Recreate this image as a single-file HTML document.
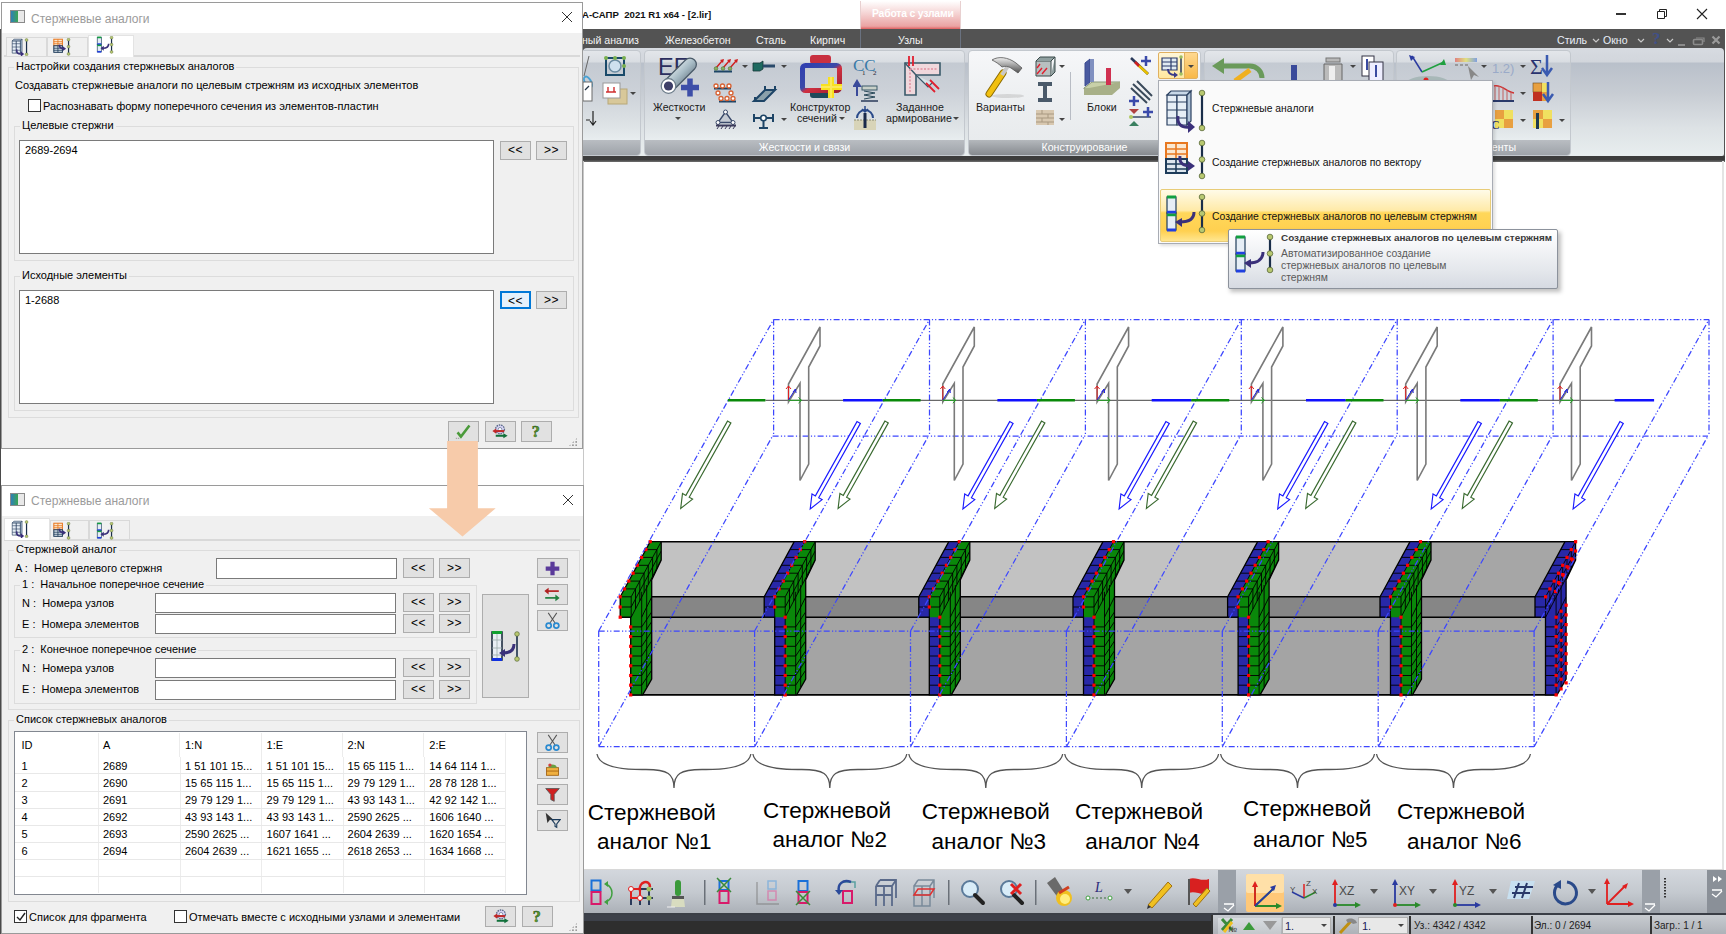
<!DOCTYPE html>
<html><head><meta charset="utf-8">
<style>
*{box-sizing:border-box}
body{margin:0;width:1726px;height:934px;position:relative;overflow:hidden;background:#fff;font-family:"Liberation Sans",sans-serif}
.a{position:absolute}
.t{position:absolute;white-space:nowrap;font-size:11px;line-height:14px;color:#000}
.dlg{position:absolute;background:#f0f0f0;border:1px solid #9a9a9a}
.gb{position:absolute;border:1px solid #dcdcdc}
.inp{position:absolute;background:#fff;border:1px solid #7a7a7a}
.btn{position:absolute;background:#e1e1e1;border:1px solid #adadad;font-size:12px;text-align:center;color:#000;letter-spacing:0.5px}
.cb{position:absolute;width:13px;height:13px;background:#fff;border:1px solid #333}
.tab{position:absolute;background:#f0f0f0;border:1px solid #d9d9d9;border-bottom:none}
.on{background:#fff}
.lbl{position:absolute;white-space:nowrap;font-size:11px;line-height:13px;background:#f0f0f0;padding:0 2px}
.lb{position:absolute;white-space:nowrap;font-size:22.5px;line-height:23px;color:#000}
</style></head><body>
<!-- left dark edge -->
<div class="a" style="left:0;top:29px;width:1px;height:905px;background:#4a4a4a"></div>

<!-- ===== APP WINDOW ===== -->
<div class="a" style="left:583px;top:0;width:1143px;height:29px;background:#fff"></div>
<div class="t" style="left:582px;top:8px;font-size:9.6px;line-height:13px;font-weight:bold;color:#111">А-САПР&nbsp; 2021 R1 x64 - [2.lir]</div>
<div class="a" style="left:860px;top:1px;width:101px;height:28px;background:linear-gradient(#fff 0,#f6d8d8 40%,#eba3a3 90%,#e06060 100%);border-left:1px solid #e8d0d0;border-right:1px solid #e8d0d0"></div>
<div class="t" style="left:872px;top:7px;font-size:10.4px;color:#fff;font-weight:bold;letter-spacing:-0.2px">Работа с узлами</div>
<!-- window controls -->
<div class="a" style="left:1616px;top:13px;width:10px;height:1.5px;background:#333"></div>
<svg class="a" style="left:1655px;top:8px" width="13" height="12"><path d="M2.5 3.5h7v7h-7z M4.5 3.5v-2h7v7h-2" fill="none" stroke="#222"/></svg>
<svg class="a" style="left:1696px;top:8px" width="12" height="12"><path d="M1 1L11 11M11 1L1 11" stroke="#222" stroke-width="1.1"/></svg>
<!-- tab bar -->
<div class="a" style="left:583px;top:29px;width:1142px;height:133px;background:#535353"></div>
<div class="a" style="left:860px;top:29px;width:101px;height:19px;border-left:1px solid #6a7280;border-right:1px solid #6a7280"></div>
<div class="t" style="left:582px;top:33px;font-size:10.6px;color:#f2f2f2">ный анализ</div>
<div class="t" style="left:665px;top:33px;font-size:10.6px;color:#f2f2f2">Железобетон</div>
<div class="t" style="left:756px;top:33px;font-size:10.6px;color:#f2f2f2">Сталь</div>
<div class="t" style="left:810px;top:33px;font-size:10.6px;color:#f2f2f2">Кирпич</div>
<div class="t" style="left:898px;top:33px;font-size:10.6px;color:#f2f2f2">Узлы</div>
<div class="t" style="left:1557px;top:33px;font-size:10.6px;color:#e8eef8">Стиль</div>
<div class="t" style="left:1603px;top:33px;font-size:10.6px;color:#e8eef8">Окно</div>
<svg class="a" style="left:1590px;top:36px" width="120" height="10"><g fill="none" stroke="#c8c8c8" stroke-width="1.2"><path d="M3 3l3 3 3-3"/><path d="M48 3l3 3 3-3"/><path d="M77 3l3 3 3-3"/></g><rect x="88" y="8" width="7" height="2" fill="#8a8a8a"/><rect x="103.5" y="3.5" width="9" height="5" rx="1" fill="none" stroke="#8a8a8a" stroke-width="1.6"/><path d="M106 2h8v4" fill="none" stroke="#8a8a8a" stroke-width="1.2"/></svg>
<div class="t" style="left:1652px;top:31px;font-size:17px;line-height:16px;color:#40508a;font-weight:bold;font-family:'Liberation Serif'">?</div>
<svg class="a" style="left:1710px;top:34px" width="12" height="12"><path d="M2.5 2.5L9.5 9.5M9.5 2.5L2.5 9.5" stroke="#9a9a9a" stroke-width="2.2"/></svg>
<!-- ribbon base -->
<div class="a" style="left:583px;top:48px;width:1141px;height:108px;border-radius:4px 4px 2px 2px;background:linear-gradient(#d7dbe1 0,#d2d6dc 14px,#b9c0ca 15px,#c7ccd3 45px,#dde2e5 80px,#e8eeef 100%)"></div>
<style>
.pn{position:absolute;top:50px;height:106px;border-radius:4px;border:1px solid #c3c8ce;background:linear-gradient(#e3e6ea 0,#d9dde2 11px,#c4cad2 12px,#ccd1d8 40px,#dee3e6 75px,#e9eef0 90px)}
.pl{position:absolute;left:0;right:0;bottom:0;height:15px;background:linear-gradient(#b9bdc2,#9ea3a9);border-radius:0 0 3px 3px;color:#fff;font-size:10.6px;line-height:15px;text-align:center;white-space:nowrap}
.rt{position:absolute;white-space:nowrap;font-size:10.6px;line-height:12px;color:#1a1a1a;text-align:center}
.dd{position:absolute;width:0;height:0;border-left:3px solid transparent;border-right:3px solid transparent;border-top:3px solid #444}
</style>
<div class="pn" style="left:578px;width:63px"><div class="pl"></div></div>
<div class="pn" style="left:644px;width:321px"><div class="pl">Жесткости и связи</div></div>
<div class="pn" style="left:968px;width:233px;background:linear-gradient(#f6f7f9 0,#eef0f2 40%,#e8ebed 90px)"><div class="pl" style="background:linear-gradient(#b4b8bc,#868a8f)">Конструирование</div></div>
<div class="pn" style="left:1204px;width:190px"><div class="pl"></div></div>
<div class="pn" style="left:1396px;width:175px"><div class="pl" style="text-align:right;padding-right:54px">Инструменты</div></div>
<!-- P1 icons -->
<svg class="a" style="left:583px;top:54px" width="58" height="80">
 <path d="M6 2 L1 22" stroke="#666" stroke-width="1"/><ellipse cx="5" cy="28" rx="3" ry="6" fill="none" stroke="#4aa0d0" stroke-width="2" transform="rotate(-30 5 28)"/>
 <rect x="23" y="4" width="18" height="17" fill="none" stroke="#1a4a6a" stroke-width="2"/><circle cx="32" cy="12" r="6" fill="#cfe0ee" stroke="#6a8aa0" stroke-width="1.5"/><circle cx="23" cy="4" r="2" fill="#7ab050"/><circle cx="32" cy="4" r="2" fill="#7ab050"/><circle cx="41" cy="4" r="2" fill="#7ab050"/><circle cx="41" cy="12" r="2" fill="#7ab050"/>
 <rect x="0" y="28" width="9" height="19" fill="#fff" stroke="#6a6a6a"/><path d="M2 36l4-4" stroke="#234" stroke-width="1.2"/>
 <rect x="25" y="35" width="19" height="15" fill="#d8c89a" stroke="#b8a878"/><rect x="20" y="29" width="17" height="15" fill="#fff" stroke="#999"/><path d="M23 38h10M25 33v5M31 33v5" stroke="#d03030" stroke-width="1.4"/>
 <path d="M3 66h4M10 57v13M7 67l3 4 3-4" stroke="#222" stroke-width="1.2" fill="none"/>
</svg>
<div class="dd" style="left:630px;top:92px"></div>
<!-- P2 icons -->
<svg class="a" style="left:655px;top:55px" width="50" height="45">
 <defs><linearGradient id="pg" x1="0" y1="0" x2="1" y2="1"><stop offset="0" stop-color="#f4f8fa"/><stop offset=".5" stop-color="#a8bcc6"/><stop offset="1" stop-color="#5a6a78"/></linearGradient></defs>
 <text x="3" y="19.5" font-family="Liberation Sans" font-size="23.5" fill="#2b2e5e">EF</text>
 <path d="M13.5 31 L35 9.5" stroke="#4a5a68" stroke-width="14" stroke-linecap="round"/><path d="M13.5 31 L35 9.5" stroke="url(#pg)" stroke-width="11.5" stroke-linecap="round"/>
 <circle cx="13.5" cy="31" r="7.3" fill="#fff" stroke="#6a7a88" stroke-width="1.2"/><circle cx="13.5" cy="31" r="4.6" fill="#3e3f68"/>
 <path d="M35 23.5v18M26 32.5h18" stroke="#3d4ea8" stroke-width="5.5"/>
</svg>
<div class="rt" style="left:653px;top:101px">Жесткости</div>
<div class="dd" style="left:675px;top:117px"></div>
<svg class="a" style="left:712px;top:57px" width="80" height="75">
 <g stroke="#1d4466" stroke-width="2" fill="none"><path d="M2 14.5h18"/><path d="M2 31.5h17M7 44.5h17"/></g>
 <g stroke="#d02020" stroke-width="1.4" fill="none"><path d="M4 11l6-7M11 11l6-7M18 11l6-7"/></g><g fill="#d02020"><path d="M8 3l4-1-1 4z M15 3l4-1-1 4z M22 3l4-1-1 4z"/></g>
 <g fill="#8ab060" stroke="#4a7030" stroke-width=".6"><circle cx="4" cy="11.5" r="1.8"/><circle cx="11" cy="11.5" r="1.8"/><circle cx="18" cy="11.5" r="1.8"/></g>
 <g fill="#fff" stroke="#d86030" stroke-width="1.3"><circle cx="4" cy="29" r="2"/><circle cx="10.5" cy="29" r="2"/><circle cx="17" cy="29" r="2"/><circle cx="6" cy="36" r="2"/><circle cx="19" cy="36" r="2"/><circle cx="9" cy="41.5" r="2"/><circle cx="15" cy="41.5" r="2"/><circle cx="21" cy="41.5" r="2"/></g>
 <path d="M13.5 55 L6 65.5 H21 Z" fill="#c5cbd3" stroke="#3a4a6a" stroke-width="1.4"/><circle cx="13.5" cy="55" r="2" fill="#fff" stroke="#3a4a6a"/><circle cx="6" cy="65.5" r="2" fill="#fff" stroke="#3a4a6a"/><circle cx="21" cy="65.5" r="2" fill="#fff" stroke="#3a4a6a"/><path d="M4 68.5h20" stroke="#3a3a5a" stroke-width="2"/><path d="M5 72l2-3M9 72l2-3M13 72l2-3M17 72l2-3M21 72l2-3" stroke="#3a3a5a"/>
 <path d="M41 6h7l3-2v8l-3 2h-7z" fill="#1e6a60" stroke="#183838" stroke-width=".8"/><path d="M51 9h12" stroke="#2a4a6a" stroke-width="3"/>
 <path d="M42 44 L53 33 H63 L52 44 Z" fill="#8aa0aa" stroke="#1d4466" stroke-width="2"/><path d="M43 44v-4M63 33v-4M53 33v-4" stroke="#1d4466" stroke-width="2"/>
 <path d="M42 61h19M42 57v8M61 57v8M51.5 61v10M47 71h9" stroke="#1d4466" stroke-width="2"/><circle cx="51.5" cy="61" r="2.8" fill="#fff" stroke="#1d4466" stroke-width="1.6"/>
</svg>
<div class="dd" style="left:742px;top:65px"></div><div class="dd" style="left:781px;top:65px"></div><div class="dd" style="left:781px;top:118px"></div>
<svg class="a" style="left:798px;top:54px" width="48" height="46">
 <defs><linearGradient id="kg" x1="0" y1="0" x2="1" y2="1"><stop offset="0" stop-color="#3040b0"/><stop offset=".45" stop-color="#3a4aa8"/><stop offset=".55" stop-color="#d03040"/><stop offset="1" stop-color="#a02030"/></linearGradient></defs>
 <rect x="12" y="1" width="21" height="9" rx="3" fill="#c83040"/><rect x="12" y="36" width="21" height="8" rx="3" fill="#1e4a5a"/>
 <rect x="4.5" y="11.5" width="37" height="25" rx="3" fill="none" stroke="url(#kg)" stroke-width="5"/>
 <path d="M33 23v21M23 33h21" stroke="#f8e020" stroke-width="6"/><path d="M33 23v21M23 33h21" stroke="#fff080" stroke-width="2" opacity=".6"/>
</svg>
<div class="rt" style="left:790px;top:101px">Конструктор</div>
<div class="rt" style="left:797px;top:112px">сечений</div><div class="dd" style="left:839px;top:117px"></div>
<svg class="a" style="left:853px;top:55px" width="28" height="75">
 <text x="0" y="16" font-family="Liberation Serif" font-size="17" fill="#3a7aa8">CC</text><text x="9" y="20" font-family="Liberation Serif" font-size="7" fill="#223">1</text><text x="20" y="20" font-family="Liberation Serif" font-size="7" fill="#223">2</text>
 <g transform="translate(0,-7)"><path d="M4 48v-13M1 38l3-5 3 5z" stroke="#3a4a9a" stroke-width="2" fill="#3a4a9a"/><rect x="9" y="38" width="15" height="4" fill="#c8d0c8" stroke="#3a5a6a"/><path d="M11 43l11 2-11 2 11 2-11 2" stroke="#2a4a5a" fill="none"/><path d="M8 53h17" stroke="#2a3a5a" stroke-width="1.5"/></g>
 <g transform="translate(0,3)"><rect x="1" y="62" width="22" height="11" fill="#d8d4b8"/><path d="M1 62h22" stroke="#8a8a70" stroke-dasharray="2,1"/><path d="M12 55v15" stroke="#1a2a4a" stroke-width="3"/><path d="M4 60a8 8 0 0 1 16 0" fill="none" stroke="#2a4a8a" stroke-width="2"/><path d="M12 48v6M9 51l3 3 3-3" stroke="#2a4a8a" stroke-width="1.5" fill="none"/></g>
</svg>
<svg class="a" style="left:902px;top:55px" width="42" height="44">
 <path d="M3 8 L3 40 L14 40 L14 20 L38 20 L38 8 Z" fill="#f0d8dc" stroke="#3a5a6a" stroke-width="1.6"/>
 <path d="M3 8 L14 20" stroke="#3a5a6a" stroke-width="1.4"/><path d="M8 14v24M8 14h28" stroke="#e090a0" stroke-width="1.5" stroke-dasharray="2,1.5"/>
 <path d="M14 20 L26 32 L30 28" fill="#d8e4e8" stroke="#3a5a6a" stroke-width="1.2"/>
 <path d="M7 1v10M11 1v10" stroke="#e02030" stroke-width="1.8"/><path d="M24 28l9 9M28 25l9 9" stroke="#e02030" stroke-width="1.8"/>
</svg>
<div class="rt" style="left:896px;top:101px">Заданное</div>
<div class="rt" style="left:886px;top:112px">армирование</div><div class="dd" style="left:953px;top:117px"></div>
<!-- P3 icons -->
<svg class="a" style="left:978px;top:54px" width="48" height="46">
 <defs><linearGradient id="hg" x1="0" y1="0" x2="0" y2="1"><stop offset="0" stop-color="#f0f0f0"/><stop offset=".5" stop-color="#a0a0a0"/><stop offset="1" stop-color="#505050"/></linearGradient></defs>
 <ellipse cx="30" cy="42" rx="16" ry="2" fill="#bbb" opacity=".5"/>
 <path d="M11 40 L25 19" stroke="#8a6a00" stroke-width="7" stroke-linecap="round"/><path d="M11 40 L25 19" stroke="#f2c010" stroke-width="5" stroke-linecap="round"/>
 <path d="M24 21 L30 12" stroke="#c8c8c8" stroke-width="4"/>
 <path d="M14 6 C20 2 30 3 38 9 L44 14 L40 19 L33 14 C30 12 27 12 24 13 C21 10 18 8 14 6 Z" fill="url(#hg)" stroke="#555" stroke-width=".8"/>
</svg>
<div class="rt" style="left:976px;top:101px">Варианты</div>
<svg class="a" style="left:1033px;top:56px" width="40" height="75">
 <path d="M3 5h15v15H3z" fill="#b8c0c0" stroke="#3a4a4a"/><path d="M3 5l4-4h15l-4 4M18 20l4-4V1" fill="#90a0a0" stroke="#3a4a4a"/><path d="M4 18l5-6M9 18l5-6M4 12l3-4" stroke="#e02030" stroke-width="1.4"/>
 <path d="M5 28h14M12 28v16M5 44h14" stroke="#4a5a6a" stroke-width="4"/>
 <rect x="3" y="54" width="18" height="15" fill="#d8c8b0"/><path d="M3 58h18M3 62h18M3 66h18M9 54v4M15 58v4M9 62v4M15 66v3" stroke="#a89880" stroke-width="1"/>
</svg>
<div class="dd" style="left:1059px;top:65px"></div><div class="dd" style="left:1059px;top:118px"></div>
<div class="a" style="left:1070px;top:72px;width:1px;height:48px;background:#b8bcc4"></div>
<svg class="a" style="left:1082px;top:58px" width="42" height="38">
 <path d="M2 30 L10 24 H38 L30 31 H2 Z" fill="#c8d0a8" stroke="#8a9878"/><path d="M2 31v6h28l8-7v-6" fill="#a8b088"/>
 <path d="M3 28V5l5-4v23z" fill="#4a5aa0" stroke="#3a4a90"/><rect x="8" y="1" width="4" height="23" fill="#8090c0"/>
 <rect x="24" y="10" width="5" height="17" fill="#d03050"/>
</svg>
<div class="rt" style="left:1087px;top:101px">Блоки</div>
<svg class="a" style="left:1128px;top:54px" width="28" height="75">
 <path d="M3 4 L20 20" stroke="#2a3a5a" stroke-width="2.5"/><path d="M10 11 L20 20" stroke="#e8c000" stroke-width="2.5"/><path d="M7 8l4 4" stroke="#d02020" stroke-width="2.5"/><path d="M18 2v10M13 7h10" stroke="#3a4aaa" stroke-width="2.5"/>
 <path d="M5 30 L22 46M9 27 L24 42M3 34 L19 49" stroke="#3a4a5a" stroke-width="2"/><path d="M6 42v10M1 47h10" stroke="#3a4aaa" stroke-width="2.5"/>
 <path d="M3 63h20" stroke="#3a4a6a" stroke-width="1.5"/><path d="M6 60l5-5h-10z" fill="#b04040"/><path d="M6 67l5 5h-10z" fill="#3a8060"/><circle cx="3" cy="63" r="2" fill="#b0c860"/><path d="M20 53v10M15 58h10" stroke="#3a4aaa" stroke-width="2.5"/>
</svg>
<div class="a" style="left:1158px;top:52px;width:40px;height:27px;border:1px solid #e0b060;border-radius:2px;background:linear-gradient(#fff6d8,#ffe8a0)"></div>
<div class="a" style="left:1184px;top:53px;width:13px;height:25px;background:linear-gradient(#ffd890,#f8b848);border-left:1px solid #e0b060"></div>
<div class="dd" style="left:1188px;top:65px"></div>
<svg class="a" style="left:1160px;top:54px" width="24" height="24">
 <path d="M2 4h9v12H2z M11 4h6v12h-6" fill="#e0eaf2" stroke="#2a3a6a" stroke-width="1.2"/><path d="M2 8h15M2 12h15" stroke="#2a3a6a"/>
 <path d="M8 15c0 5 3 6 7 6" fill="none" stroke="#3a3a8a" stroke-width="2"/><path d="M14 18l4 3-4 3z" fill="#3a3a8a"/><path d="M21 3v17" stroke="#2a3a5a" stroke-width="1.5"/><circle cx="21" cy="3" r="1.8" fill="#a0c060"/><circle cx="21" cy="20" r="1.8" fill="#a0c060"/>
</svg>
<!-- P4 top icons -->
<svg class="a" style="left:1210px;top:54px" width="180" height="28">
 <path d="M12 12 H40 A12 12 0 0 1 52 24" fill="none" stroke="#6a9a5a" stroke-width="5"/><path d="M2 12 L14 4 V20 Z" fill="#6a9a5a"/><path d="M25 27 L40 16" stroke="#f0b020" stroke-width="5"/>
 <rect x="81" y="11" width="6" height="17" fill="#3a4a9a"/>
 <rect x="116" y="4" width="14" height="4" fill="#b8b8b8" stroke="#777"/><path d="M114 10h18v17h-18z" fill="#bbb" stroke="#666"/><rect x="119" y="12" width="6" height="14" fill="#eee"/>
 <rect x="152" y="2" width="12" height="20" fill="#fff" stroke="#334"/><rect x="159" y="8" width="14" height="19" fill="#eef" stroke="#334"/><path d="M157 5v11M166 11v12" stroke="#3a4aa0" stroke-width="2"/>
</svg>
<div class="dd" style="left:1350px;top:65px"></div>
<!-- P5 icons -->
<svg class="a" style="left:1400px;top:54px" width="170" height="80">
 <defs><linearGradient id="rb"><stop offset="0" stop-color="#e08080"/><stop offset=".5" stop-color="#e0e080"/><stop offset="1" stop-color="#80a0e0"/></linearGradient></defs>
 <ellipse cx="28" cy="30" rx="22" ry="8" fill="#a8b8b8"/><path d="M12 2 L22 18" fill="none" stroke="#2a3aa0" stroke-width="1.5"/><path d="M22 18 L44 8" stroke="#20a040" stroke-width="1.5"/><path d="M9 1l6 2-4 4z" fill="#2a3aa0"/><path d="M44 5l2 6-6 0z" fill="#20a040"/><circle cx="26" cy="26" r="2.5" fill="#e02020"/>
 <rect x="55" y="4" width="22" height="4" fill="url(#rb)"/><path d="M55 11h3M60 11h3M65 11h3" stroke="#888" stroke-width="1.5"/><path d="M68 12l3 14 3-5 5 2z" fill="#888"/>
 <text x="92" y="19" font-family="Liberation Sans" font-size="13" fill="#9aaac8">1.2)</text>
 <text x="130" y="20" font-family="Liberation Serif" font-size="22" fill="#2a3470">Σ</text><path d="M147 1v19M142 14l5 7 5-7" stroke="#3a5ab0" stroke-width="2.5" fill="none"/>
 <path d="M94 32 C102 30 106 38 114 39" fill="none" stroke="#d03030" stroke-width="1.5"/><path d="M95 33v13M99 32v14M103 33v13M107 36v10M111 38v8" stroke="#c06060" stroke-width="1"/><path d="M93 47h21" stroke="#2a3a6a" stroke-width="2"/>
 <rect x="133" y="29" width="9" height="9" fill="#e8a040" stroke="#6a4a20" stroke-width=".6"/><rect x="142" y="29" width="6" height="9" fill="#f0e060"/><rect x="133" y="38" width="9" height="9" fill="#c03020"/><rect x="142" y="38" width="6" height="9" fill="#e8a040"/><path d="M148 28v19M143 40l5 7 5-7" stroke="#3a5ab0" stroke-width="2.5" fill="none"/>
 <rect x="95" y="56" width="9" height="9" fill="#e8a040"/><rect x="104" y="56" width="9" height="9" fill="#f0e060"/><rect x="95" y="65" width="9" height="9" fill="#f0e060"/><rect x="104" y="65" width="9" height="9" fill="#e8a040"/><text x="91" y="75" font-family="Liberation Serif" font-weight="bold" font-size="12" fill="#3a3a6a">C</text>
 <rect x="133" y="56" width="10" height="9" fill="#e8a040"/><rect x="143" y="56" width="9" height="9" fill="#f0e060"/><rect x="133" y="65" width="10" height="9" fill="#f0e060"/><rect x="143" y="65" width="9" height="9" fill="#e8a040"/><rect x="136" y="59" width="3" height="16" fill="#1e3a50"/>
</svg>
<div class="dd" style="left:1481px;top:65px"></div><div class="dd" style="left:1520px;top:65px"></div><div class="dd" style="left:1520px;top:92px"></div><div class="dd" style="left:1520px;top:119px"></div><div class="dd" style="left:1559px;top:119px"></div>
<!-- dark line below ribbon -->
<div class="a" style="left:583px;top:156px;width:1142px;height:6px;background:linear-gradient(#3c3c3c 0,#3c3c3c 60%,#707070 100%)"></div>


<svg class="a" style="left:0;top:0" width="1726" height="934" viewBox="0 0 1726 934">
<polygon points="650,541.7 1565,541.7 1535,596.8 620,596.8" fill="#c2c2c2"/>
<polygon points="1410,541.7 1565,541.7 1535,596.8 1380,596.8" fill="#a6a6a6"/>
<rect x="620" y="596.8" width="916" height="20.4" fill="#868686"/>
<rect x="631" y="617.2" width="915" height="77.7" fill="#a4a4a4"/>
<g stroke="#000" stroke-width="1.6" fill="none">
<path d="M650 541.7H1577"/>
<path d="M620 596.8H1536M620 617.2H1546M631 694.9H1557"/>
</g>
<clipPath id="cc0"><polygon points="650.2,541.7 661.2,541.7 661.2,560.0 651.7,580.0 651.7,679.0 642.7,694.9 630.7,694.9 630.7,617.2 620.2,617.2 620.2,596.8"/></clipPath><polygon points="650.2,541.7 661.2,541.7 661.2,560.0 651.7,580.0 651.7,679.0 642.7,694.9 630.7,694.9 630.7,617.2 620.2,617.2 620.2,596.8" fill="#0a880a"/><path d="M645.9 549.6H656.9 M641.6 557.4H652.6 M637.3 565.3H648.3 M633.1 573.2H644.1 M628.8 581.1H639.8 M624.5 588.9H635.5 M661.2 541.7L631.2 596.8 M620.2 596.8H631.2 M620.2 607.0H631.2 M631.2 596.8V617.2 M631.2 607.0L661.2 551.0 M631.2 617.2L661.2 560.0 M635.5 588.9L635.5 609.0 M639.8 581.1L639.8 600.9 M644.1 573.2L644.1 592.7 M648.3 565.3L648.3 584.5 M652.6 557.4L652.6 576.3 M656.9 549.6L656.9 568.2 M641.7 591.8V694.9 M630.7 626.9H641.7 M641.7 626.9L651.7 611.9 M630.7 636.6H641.7 M641.7 636.6L651.7 621.6 M630.7 646.3H641.7 M641.7 646.3L651.7 631.3 M630.7 656.0H641.7 M641.7 656.0L651.7 641.0 M630.7 665.8H641.7 M641.7 665.8L651.7 650.8 M630.7 675.5H641.7 M641.7 675.5L651.7 660.5 M630.7 685.2H641.7 M641.7 685.2L651.7 670.2 M646.7 585.0V687.0 M641.7 617.2L651.7 597.0" stroke="#000" stroke-width="0.9" fill="none" clip-path="url(#cc0)"/><polygon points="650.2,541.7 661.2,541.7 661.2,560.0 651.7,580.0 651.7,679.0 642.7,694.9 630.7,694.9 630.7,617.2 620.2,617.2 620.2,596.8" fill="none" stroke="#000" stroke-width="1.3"/><rect x="648.6" y="540.1" width="3.2" height="3.2" fill="#f00"/><rect x="644.3" y="548.0" width="3.2" height="3.2" fill="#f00"/><rect x="640.0" y="555.8" width="3.2" height="3.2" fill="#f00"/><rect x="635.7" y="563.7" width="3.2" height="3.2" fill="#f00"/><rect x="631.5" y="571.6" width="3.2" height="3.2" fill="#f00"/><rect x="627.2" y="579.5" width="3.2" height="3.2" fill="#f00"/><rect x="622.9" y="587.3" width="3.2" height="3.2" fill="#f00"/><rect x="618.6" y="595.2" width="3.2" height="3.2" fill="#f00"/><rect x="618.6" y="605.4" width="3.2" height="3.2" fill="#f00"/><rect x="618.6" y="615.6" width="3.2" height="3.2" fill="#f00"/><rect x="629.1" y="625.3" width="3.2" height="3.2" fill="#f00"/><rect x="629.1" y="635.0" width="3.2" height="3.2" fill="#f00"/><rect x="629.1" y="644.7" width="3.2" height="3.2" fill="#f00"/><rect x="629.1" y="654.4" width="3.2" height="3.2" fill="#f00"/><rect x="629.1" y="664.2" width="3.2" height="3.2" fill="#f00"/><rect x="629.1" y="673.9" width="3.2" height="3.2" fill="#f00"/><rect x="629.1" y="683.6" width="3.2" height="3.2" fill="#f00"/><rect x="629.1" y="693.3" width="3.2" height="3.2" fill="#f00"/>
<clipPath id="cc1"><polygon points="794.2,541.7 815.2,541.7 815.2,560.0 805.7,580.0 805.7,679.0 796.7,694.9 774.7,694.9 774.7,617.2 764.2,617.2 764.2,596.8"/></clipPath><polygon points="794.2,541.7 815.2,541.7 815.2,560.0 805.7,580.0 805.7,679.0 796.7,694.9 774.7,694.9 774.7,617.2 764.2,617.2 764.2,596.8" fill="#0a880a"/><polygon points="794.2,541.7 804.7,541.7 774.7,596.8 774.7,617.2 785.2,617.2 785.2,694.9 774.7,694.9 774.7,617.2 764.2,617.2 764.2,596.8" fill="#2828a8"/><path d="M789.9 549.6H810.9 M785.6 557.4H806.6 M781.3 565.3H802.3 M777.1 573.2H798.1 M772.8 581.1H793.8 M768.5 588.9H789.5 M804.7 541.7L774.7 596.8 M774.7 596.8V617.2 M785.2 617.2V694.9 M815.2 541.7L785.2 596.8 M764.2 596.8H785.2 M764.2 607.0H785.2 M785.2 596.8V617.2 M785.2 607.0L815.2 551.0 M785.2 617.2L815.2 560.0 M789.5 588.9L789.5 609.0 M793.8 581.1L793.8 600.9 M798.1 573.2L798.1 592.7 M802.3 565.3L802.3 584.5 M806.6 557.4L806.6 576.3 M810.9 549.6L810.9 568.2 M795.7 591.8V694.9 M774.7 626.9H795.7 M795.7 626.9L805.7 611.9 M774.7 636.6H795.7 M795.7 636.6L805.7 621.6 M774.7 646.3H795.7 M795.7 646.3L805.7 631.3 M774.7 656.0H795.7 M795.7 656.0L805.7 641.0 M774.7 665.8H795.7 M795.7 665.8L805.7 650.8 M774.7 675.5H795.7 M795.7 675.5L805.7 660.5 M774.7 685.2H795.7 M795.7 685.2L805.7 670.2 M800.7 585.0V687.0 M795.7 617.2L805.7 597.0" stroke="#000" stroke-width="0.9" fill="none" clip-path="url(#cc1)"/><polygon points="794.2,541.7 815.2,541.7 815.2,560.0 805.7,580.0 805.7,679.0 796.7,694.9 774.7,694.9 774.7,617.2 764.2,617.2 764.2,596.8" fill="none" stroke="#000" stroke-width="1.3"/><rect x="803.1" y="540.1" width="3.2" height="3.2" fill="#f00"/><rect x="798.8" y="548.0" width="3.2" height="3.2" fill="#f00"/><rect x="794.5" y="555.8" width="3.2" height="3.2" fill="#f00"/><rect x="790.2" y="563.7" width="3.2" height="3.2" fill="#f00"/><rect x="786.0" y="571.6" width="3.2" height="3.2" fill="#f00"/><rect x="781.7" y="579.5" width="3.2" height="3.2" fill="#f00"/><rect x="777.4" y="587.3" width="3.2" height="3.2" fill="#f00"/><rect x="773.1" y="595.2" width="3.2" height="3.2" fill="#f00"/><rect x="773.1" y="605.4" width="3.2" height="3.2" fill="#f00"/><rect x="783.6" y="615.6" width="3.2" height="3.2" fill="#f00"/><rect x="783.6" y="625.3" width="3.2" height="3.2" fill="#f00"/><rect x="783.6" y="635.0" width="3.2" height="3.2" fill="#f00"/><rect x="783.6" y="644.7" width="3.2" height="3.2" fill="#f00"/><rect x="783.6" y="654.4" width="3.2" height="3.2" fill="#f00"/><rect x="783.6" y="664.2" width="3.2" height="3.2" fill="#f00"/><rect x="783.6" y="673.9" width="3.2" height="3.2" fill="#f00"/><rect x="783.6" y="683.6" width="3.2" height="3.2" fill="#f00"/><rect x="783.6" y="693.3" width="3.2" height="3.2" fill="#f00"/>
<clipPath id="cc2"><polygon points="948.8,541.7 969.8,541.7 969.8,560.0 960.3,580.0 960.3,679.0 951.3,694.9 929.3,694.9 929.3,617.2 918.8,617.2 918.8,596.8"/></clipPath><polygon points="948.8,541.7 969.8,541.7 969.8,560.0 960.3,580.0 960.3,679.0 951.3,694.9 929.3,694.9 929.3,617.2 918.8,617.2 918.8,596.8" fill="#0a880a"/><polygon points="948.8,541.7 959.3,541.7 929.3,596.8 929.3,617.2 939.8,617.2 939.8,694.9 929.3,694.9 929.3,617.2 918.8,617.2 918.8,596.8" fill="#2828a8"/><path d="M944.5 549.6H965.5 M940.2 557.4H961.2 M935.9 565.3H956.9 M931.7 573.2H952.7 M927.4 581.1H948.4 M923.1 588.9H944.1 M959.3 541.7L929.3 596.8 M929.3 596.8V617.2 M939.8 617.2V694.9 M969.8 541.7L939.8 596.8 M918.8 596.8H939.8 M918.8 607.0H939.8 M939.8 596.8V617.2 M939.8 607.0L969.8 551.0 M939.8 617.2L969.8 560.0 M944.1 588.9L944.1 609.0 M948.4 581.1L948.4 600.9 M952.7 573.2L952.7 592.7 M956.9 565.3L956.9 584.5 M961.2 557.4L961.2 576.3 M965.5 549.6L965.5 568.2 M950.3 591.8V694.9 M929.3 626.9H950.3 M950.3 626.9L960.3 611.9 M929.3 636.6H950.3 M950.3 636.6L960.3 621.6 M929.3 646.3H950.3 M950.3 646.3L960.3 631.3 M929.3 656.0H950.3 M950.3 656.0L960.3 641.0 M929.3 665.8H950.3 M950.3 665.8L960.3 650.8 M929.3 675.5H950.3 M950.3 675.5L960.3 660.5 M929.3 685.2H950.3 M950.3 685.2L960.3 670.2 M955.3 585.0V687.0 M950.3 617.2L960.3 597.0" stroke="#000" stroke-width="0.9" fill="none" clip-path="url(#cc2)"/><polygon points="948.8,541.7 969.8,541.7 969.8,560.0 960.3,580.0 960.3,679.0 951.3,694.9 929.3,694.9 929.3,617.2 918.8,617.2 918.8,596.8" fill="none" stroke="#000" stroke-width="1.3"/><rect x="957.7" y="540.1" width="3.2" height="3.2" fill="#f00"/><rect x="953.4" y="548.0" width="3.2" height="3.2" fill="#f00"/><rect x="949.1" y="555.8" width="3.2" height="3.2" fill="#f00"/><rect x="944.8" y="563.7" width="3.2" height="3.2" fill="#f00"/><rect x="940.6" y="571.6" width="3.2" height="3.2" fill="#f00"/><rect x="936.3" y="579.5" width="3.2" height="3.2" fill="#f00"/><rect x="932.0" y="587.3" width="3.2" height="3.2" fill="#f00"/><rect x="927.7" y="595.2" width="3.2" height="3.2" fill="#f00"/><rect x="927.7" y="605.4" width="3.2" height="3.2" fill="#f00"/><rect x="938.2" y="615.6" width="3.2" height="3.2" fill="#f00"/><rect x="938.2" y="625.3" width="3.2" height="3.2" fill="#f00"/><rect x="938.2" y="635.0" width="3.2" height="3.2" fill="#f00"/><rect x="938.2" y="644.7" width="3.2" height="3.2" fill="#f00"/><rect x="938.2" y="654.4" width="3.2" height="3.2" fill="#f00"/><rect x="938.2" y="664.2" width="3.2" height="3.2" fill="#f00"/><rect x="938.2" y="673.9" width="3.2" height="3.2" fill="#f00"/><rect x="938.2" y="683.6" width="3.2" height="3.2" fill="#f00"/><rect x="938.2" y="693.3" width="3.2" height="3.2" fill="#f00"/>
<clipPath id="cc3"><polygon points="1103.0,541.7 1124.0,541.7 1124.0,560.0 1114.5,580.0 1114.5,679.0 1105.5,694.9 1083.5,694.9 1083.5,617.2 1073.0,617.2 1073.0,596.8"/></clipPath><polygon points="1103.0,541.7 1124.0,541.7 1124.0,560.0 1114.5,580.0 1114.5,679.0 1105.5,694.9 1083.5,694.9 1083.5,617.2 1073.0,617.2 1073.0,596.8" fill="#0a880a"/><polygon points="1103.0,541.7 1113.5,541.7 1083.5,596.8 1083.5,617.2 1094.0,617.2 1094.0,694.9 1083.5,694.9 1083.5,617.2 1073.0,617.2 1073.0,596.8" fill="#2828a8"/><path d="M1098.7 549.6H1119.7 M1094.4 557.4H1115.4 M1090.1 565.3H1111.1 M1085.9 573.2H1106.9 M1081.6 581.1H1102.6 M1077.3 588.9H1098.3 M1113.5 541.7L1083.5 596.8 M1083.5 596.8V617.2 M1094.0 617.2V694.9 M1124.0 541.7L1094.0 596.8 M1073.0 596.8H1094.0 M1073.0 607.0H1094.0 M1094.0 596.8V617.2 M1094.0 607.0L1124.0 551.0 M1094.0 617.2L1124.0 560.0 M1098.3 588.9L1098.3 609.0 M1102.6 581.1L1102.6 600.9 M1106.9 573.2L1106.9 592.7 M1111.1 565.3L1111.1 584.5 M1115.4 557.4L1115.4 576.3 M1119.7 549.6L1119.7 568.2 M1104.5 591.8V694.9 M1083.5 626.9H1104.5 M1104.5 626.9L1114.5 611.9 M1083.5 636.6H1104.5 M1104.5 636.6L1114.5 621.6 M1083.5 646.3H1104.5 M1104.5 646.3L1114.5 631.3 M1083.5 656.0H1104.5 M1104.5 656.0L1114.5 641.0 M1083.5 665.8H1104.5 M1104.5 665.8L1114.5 650.8 M1083.5 675.5H1104.5 M1104.5 675.5L1114.5 660.5 M1083.5 685.2H1104.5 M1104.5 685.2L1114.5 670.2 M1109.5 585.0V687.0 M1104.5 617.2L1114.5 597.0" stroke="#000" stroke-width="0.9" fill="none" clip-path="url(#cc3)"/><polygon points="1103.0,541.7 1124.0,541.7 1124.0,560.0 1114.5,580.0 1114.5,679.0 1105.5,694.9 1083.5,694.9 1083.5,617.2 1073.0,617.2 1073.0,596.8" fill="none" stroke="#000" stroke-width="1.3"/><rect x="1111.9" y="540.1" width="3.2" height="3.2" fill="#f00"/><rect x="1107.6" y="548.0" width="3.2" height="3.2" fill="#f00"/><rect x="1103.3" y="555.8" width="3.2" height="3.2" fill="#f00"/><rect x="1099.0" y="563.7" width="3.2" height="3.2" fill="#f00"/><rect x="1094.8" y="571.6" width="3.2" height="3.2" fill="#f00"/><rect x="1090.5" y="579.5" width="3.2" height="3.2" fill="#f00"/><rect x="1086.2" y="587.3" width="3.2" height="3.2" fill="#f00"/><rect x="1081.9" y="595.2" width="3.2" height="3.2" fill="#f00"/><rect x="1081.9" y="605.4" width="3.2" height="3.2" fill="#f00"/><rect x="1092.4" y="615.6" width="3.2" height="3.2" fill="#f00"/><rect x="1092.4" y="625.3" width="3.2" height="3.2" fill="#f00"/><rect x="1092.4" y="635.0" width="3.2" height="3.2" fill="#f00"/><rect x="1092.4" y="644.7" width="3.2" height="3.2" fill="#f00"/><rect x="1092.4" y="654.4" width="3.2" height="3.2" fill="#f00"/><rect x="1092.4" y="664.2" width="3.2" height="3.2" fill="#f00"/><rect x="1092.4" y="673.9" width="3.2" height="3.2" fill="#f00"/><rect x="1092.4" y="683.6" width="3.2" height="3.2" fill="#f00"/><rect x="1092.4" y="693.3" width="3.2" height="3.2" fill="#f00"/>
<clipPath id="cc4"><polygon points="1257.6,541.7 1278.6,541.7 1278.6,560.0 1269.1,580.0 1269.1,679.0 1260.1,694.9 1238.1,694.9 1238.1,617.2 1227.6,617.2 1227.6,596.8"/></clipPath><polygon points="1257.6,541.7 1278.6,541.7 1278.6,560.0 1269.1,580.0 1269.1,679.0 1260.1,694.9 1238.1,694.9 1238.1,617.2 1227.6,617.2 1227.6,596.8" fill="#0a880a"/><polygon points="1257.6,541.7 1268.1,541.7 1238.1,596.8 1238.1,617.2 1248.6,617.2 1248.6,694.9 1238.1,694.9 1238.1,617.2 1227.6,617.2 1227.6,596.8" fill="#2828a8"/><path d="M1253.3 549.6H1274.3 M1249.0 557.4H1270.0 M1244.7 565.3H1265.7 M1240.5 573.2H1261.5 M1236.2 581.1H1257.2 M1231.9 588.9H1252.9 M1268.1 541.7L1238.1 596.8 M1238.1 596.8V617.2 M1248.6 617.2V694.9 M1278.6 541.7L1248.6 596.8 M1227.6 596.8H1248.6 M1227.6 607.0H1248.6 M1248.6 596.8V617.2 M1248.6 607.0L1278.6 551.0 M1248.6 617.2L1278.6 560.0 M1252.9 588.9L1252.9 609.0 M1257.2 581.1L1257.2 600.9 M1261.5 573.2L1261.5 592.7 M1265.7 565.3L1265.7 584.5 M1270.0 557.4L1270.0 576.3 M1274.3 549.6L1274.3 568.2 M1259.1 591.8V694.9 M1238.1 626.9H1259.1 M1259.1 626.9L1269.1 611.9 M1238.1 636.6H1259.1 M1259.1 636.6L1269.1 621.6 M1238.1 646.3H1259.1 M1259.1 646.3L1269.1 631.3 M1238.1 656.0H1259.1 M1259.1 656.0L1269.1 641.0 M1238.1 665.8H1259.1 M1259.1 665.8L1269.1 650.8 M1238.1 675.5H1259.1 M1259.1 675.5L1269.1 660.5 M1238.1 685.2H1259.1 M1259.1 685.2L1269.1 670.2 M1264.1 585.0V687.0 M1259.1 617.2L1269.1 597.0" stroke="#000" stroke-width="0.9" fill="none" clip-path="url(#cc4)"/><polygon points="1257.6,541.7 1278.6,541.7 1278.6,560.0 1269.1,580.0 1269.1,679.0 1260.1,694.9 1238.1,694.9 1238.1,617.2 1227.6,617.2 1227.6,596.8" fill="none" stroke="#000" stroke-width="1.3"/><rect x="1266.5" y="540.1" width="3.2" height="3.2" fill="#f00"/><rect x="1262.2" y="548.0" width="3.2" height="3.2" fill="#f00"/><rect x="1257.9" y="555.8" width="3.2" height="3.2" fill="#f00"/><rect x="1253.6" y="563.7" width="3.2" height="3.2" fill="#f00"/><rect x="1249.4" y="571.6" width="3.2" height="3.2" fill="#f00"/><rect x="1245.1" y="579.5" width="3.2" height="3.2" fill="#f00"/><rect x="1240.8" y="587.3" width="3.2" height="3.2" fill="#f00"/><rect x="1236.5" y="595.2" width="3.2" height="3.2" fill="#f00"/><rect x="1236.5" y="605.4" width="3.2" height="3.2" fill="#f00"/><rect x="1247.0" y="615.6" width="3.2" height="3.2" fill="#f00"/><rect x="1247.0" y="625.3" width="3.2" height="3.2" fill="#f00"/><rect x="1247.0" y="635.0" width="3.2" height="3.2" fill="#f00"/><rect x="1247.0" y="644.7" width="3.2" height="3.2" fill="#f00"/><rect x="1247.0" y="654.4" width="3.2" height="3.2" fill="#f00"/><rect x="1247.0" y="664.2" width="3.2" height="3.2" fill="#f00"/><rect x="1247.0" y="673.9" width="3.2" height="3.2" fill="#f00"/><rect x="1247.0" y="683.6" width="3.2" height="3.2" fill="#f00"/><rect x="1247.0" y="693.3" width="3.2" height="3.2" fill="#f00"/>
<clipPath id="cc5"><polygon points="1410.0,541.7 1431.0,541.7 1431.0,560.0 1421.5,580.0 1421.5,679.0 1412.5,694.9 1390.5,694.9 1390.5,617.2 1380.0,617.2 1380.0,596.8"/></clipPath><polygon points="1410.0,541.7 1431.0,541.7 1431.0,560.0 1421.5,580.0 1421.5,679.0 1412.5,694.9 1390.5,694.9 1390.5,617.2 1380.0,617.2 1380.0,596.8" fill="#0a880a"/><polygon points="1410.0,541.7 1420.5,541.7 1390.5,596.8 1390.5,617.2 1401.0,617.2 1401.0,694.9 1390.5,694.9 1390.5,617.2 1380.0,617.2 1380.0,596.8" fill="#2828a8"/><path d="M1405.7 549.6H1426.7 M1401.4 557.4H1422.4 M1397.1 565.3H1418.1 M1392.9 573.2H1413.9 M1388.6 581.1H1409.6 M1384.3 588.9H1405.3 M1420.5 541.7L1390.5 596.8 M1390.5 596.8V617.2 M1401.0 617.2V694.9 M1431.0 541.7L1401.0 596.8 M1380.0 596.8H1401.0 M1380.0 607.0H1401.0 M1401.0 596.8V617.2 M1401.0 607.0L1431.0 551.0 M1401.0 617.2L1431.0 560.0 M1405.3 588.9L1405.3 609.0 M1409.6 581.1L1409.6 600.9 M1413.9 573.2L1413.9 592.7 M1418.1 565.3L1418.1 584.5 M1422.4 557.4L1422.4 576.3 M1426.7 549.6L1426.7 568.2 M1411.5 591.8V694.9 M1390.5 626.9H1411.5 M1411.5 626.9L1421.5 611.9 M1390.5 636.6H1411.5 M1411.5 636.6L1421.5 621.6 M1390.5 646.3H1411.5 M1411.5 646.3L1421.5 631.3 M1390.5 656.0H1411.5 M1411.5 656.0L1421.5 641.0 M1390.5 665.8H1411.5 M1411.5 665.8L1421.5 650.8 M1390.5 675.5H1411.5 M1411.5 675.5L1421.5 660.5 M1390.5 685.2H1411.5 M1411.5 685.2L1421.5 670.2 M1416.5 585.0V687.0 M1411.5 617.2L1421.5 597.0" stroke="#000" stroke-width="0.9" fill="none" clip-path="url(#cc5)"/><polygon points="1410.0,541.7 1431.0,541.7 1431.0,560.0 1421.5,580.0 1421.5,679.0 1412.5,694.9 1390.5,694.9 1390.5,617.2 1380.0,617.2 1380.0,596.8" fill="none" stroke="#000" stroke-width="1.3"/><rect x="1418.9" y="540.1" width="3.2" height="3.2" fill="#f00"/><rect x="1414.6" y="548.0" width="3.2" height="3.2" fill="#f00"/><rect x="1410.3" y="555.8" width="3.2" height="3.2" fill="#f00"/><rect x="1406.0" y="563.7" width="3.2" height="3.2" fill="#f00"/><rect x="1401.8" y="571.6" width="3.2" height="3.2" fill="#f00"/><rect x="1397.5" y="579.5" width="3.2" height="3.2" fill="#f00"/><rect x="1393.2" y="587.3" width="3.2" height="3.2" fill="#f00"/><rect x="1388.9" y="595.2" width="3.2" height="3.2" fill="#f00"/><rect x="1388.9" y="605.4" width="3.2" height="3.2" fill="#f00"/><rect x="1399.4" y="615.6" width="3.2" height="3.2" fill="#f00"/><rect x="1399.4" y="625.3" width="3.2" height="3.2" fill="#f00"/><rect x="1399.4" y="635.0" width="3.2" height="3.2" fill="#f00"/><rect x="1399.4" y="644.7" width="3.2" height="3.2" fill="#f00"/><rect x="1399.4" y="654.4" width="3.2" height="3.2" fill="#f00"/><rect x="1399.4" y="664.2" width="3.2" height="3.2" fill="#f00"/><rect x="1399.4" y="673.9" width="3.2" height="3.2" fill="#f00"/><rect x="1399.4" y="683.6" width="3.2" height="3.2" fill="#f00"/><rect x="1399.4" y="693.3" width="3.2" height="3.2" fill="#f00"/>
<clipPath id="cc6"><polygon points="1565.0,541.7 1575.6,541.7 1575.6,560.0 1566.1,580.0 1566.1,679.0 1557.1,694.9 1545.5,694.9 1545.5,617.2 1535.0,617.2 1535.0,596.8"/></clipPath><polygon points="1565.0,541.7 1575.6,541.7 1575.6,560.0 1566.1,580.0 1566.1,679.0 1557.1,694.9 1545.5,694.9 1545.5,617.2 1535.0,617.2 1535.0,596.8" fill="#2828a8"/><path d="M1560.7 549.6H1571.3 M1556.4 557.4H1567.0 M1552.1 565.3H1562.7 M1547.9 573.2H1558.5 M1543.6 581.1H1554.2 M1539.3 588.9H1549.9 M1575.6 541.7L1545.6 596.8 M1535.0 596.8H1545.6 M1535.0 607.0H1545.6 M1545.6 596.8V617.2 M1545.6 607.0L1575.6 551.0 M1545.6 617.2L1575.6 560.0 M1549.9 588.9L1549.9 609.0 M1554.2 581.1L1554.2 600.9 M1558.5 573.2L1558.5 592.7 M1562.7 565.3L1562.7 584.5 M1567.0 557.4L1567.0 576.3 M1571.3 549.6L1571.3 568.2 M1556.1 591.8V694.9 M1545.5 626.9H1556.1 M1556.1 626.9L1566.1 611.9 M1545.5 636.6H1556.1 M1556.1 636.6L1566.1 621.6 M1545.5 646.3H1556.1 M1556.1 646.3L1566.1 631.3 M1545.5 656.0H1556.1 M1556.1 656.0L1566.1 641.0 M1545.5 665.8H1556.1 M1556.1 665.8L1566.1 650.8 M1545.5 675.5H1556.1 M1556.1 675.5L1566.1 660.5 M1545.5 685.2H1556.1 M1556.1 685.2L1566.1 670.2 M1561.1 585.0V687.0 M1556.1 617.2L1566.1 597.0" stroke="#000" stroke-width="0.9" fill="none" clip-path="url(#cc6)"/><polygon points="1565.0,541.7 1575.6,541.7 1575.6,560.0 1566.1,580.0 1566.1,679.0 1557.1,694.9 1545.5,694.9 1545.5,617.2 1535.0,617.2 1535.0,596.8" fill="none" stroke="#000" stroke-width="1.3"/><rect x="1574.0" y="540.1" width="3.2" height="3.2" fill="#f00"/><rect x="1569.7" y="548.0" width="3.2" height="3.2" fill="#f00"/><rect x="1565.4" y="555.8" width="3.2" height="3.2" fill="#f00"/><rect x="1561.1" y="563.7" width="3.2" height="3.2" fill="#f00"/><rect x="1556.9" y="571.6" width="3.2" height="3.2" fill="#f00"/><rect x="1552.6" y="579.5" width="3.2" height="3.2" fill="#f00"/><rect x="1548.3" y="587.3" width="3.2" height="3.2" fill="#f00"/><rect x="1544.0" y="595.2" width="3.2" height="3.2" fill="#f00"/><rect x="1574.0" y="549.4" width="3.2" height="3.2" fill="#f00"/><rect x="1571.0" y="558.4" width="3.2" height="3.2" fill="#f00"/><rect x="1569.7" y="557.3" width="3.2" height="3.2" fill="#f00"/><rect x="1566.7" y="566.3" width="3.2" height="3.2" fill="#f00"/><rect x="1565.4" y="565.1" width="3.2" height="3.2" fill="#f00"/><rect x="1562.4" y="574.1" width="3.2" height="3.2" fill="#f00"/><rect x="1561.1" y="573.0" width="3.2" height="3.2" fill="#f00"/><rect x="1558.1" y="582.0" width="3.2" height="3.2" fill="#f00"/><rect x="1556.9" y="580.9" width="3.2" height="3.2" fill="#f00"/><rect x="1553.9" y="589.9" width="3.2" height="3.2" fill="#f00"/><rect x="1554.5" y="615.6" width="3.2" height="3.2" fill="#f00"/><rect x="1559.5" y="609.6" width="3.2" height="3.2" fill="#f00"/><rect x="1564.5" y="603.6" width="3.2" height="3.2" fill="#f00"/><rect x="1554.5" y="625.3" width="3.2" height="3.2" fill="#f00"/><rect x="1559.5" y="619.3" width="3.2" height="3.2" fill="#f00"/><rect x="1564.5" y="613.3" width="3.2" height="3.2" fill="#f00"/><rect x="1554.5" y="635.0" width="3.2" height="3.2" fill="#f00"/><rect x="1559.5" y="629.0" width="3.2" height="3.2" fill="#f00"/><rect x="1564.5" y="623.0" width="3.2" height="3.2" fill="#f00"/><rect x="1554.5" y="644.7" width="3.2" height="3.2" fill="#f00"/><rect x="1559.5" y="638.7" width="3.2" height="3.2" fill="#f00"/><rect x="1564.5" y="632.7" width="3.2" height="3.2" fill="#f00"/><rect x="1554.5" y="654.4" width="3.2" height="3.2" fill="#f00"/><rect x="1559.5" y="648.4" width="3.2" height="3.2" fill="#f00"/><rect x="1564.5" y="642.4" width="3.2" height="3.2" fill="#f00"/><rect x="1554.5" y="664.2" width="3.2" height="3.2" fill="#f00"/><rect x="1559.5" y="658.2" width="3.2" height="3.2" fill="#f00"/><rect x="1564.5" y="652.2" width="3.2" height="3.2" fill="#f00"/><rect x="1554.5" y="673.9" width="3.2" height="3.2" fill="#f00"/><rect x="1559.5" y="667.9" width="3.2" height="3.2" fill="#f00"/><rect x="1564.5" y="661.9" width="3.2" height="3.2" fill="#f00"/><rect x="1554.5" y="683.6" width="3.2" height="3.2" fill="#f00"/><rect x="1559.5" y="677.6" width="3.2" height="3.2" fill="#f00"/><rect x="1564.5" y="671.6" width="3.2" height="3.2" fill="#f00"/><rect x="1554.5" y="693.3" width="3.2" height="3.2" fill="#f00"/><rect x="1559.5" y="687.3" width="3.2" height="3.2" fill="#f00"/><rect x="1564.5" y="681.3" width="3.2" height="3.2" fill="#f00"/>
<path d="M598.7 631H1534.1 M598.7 746.7H1534.1 M773.6 319.5H1709.0 M772.6 436H1708.0 M598.7 631V746.7 M773.6 319.5V436 M598.7 631L773.6 319.5 M598.7 746.7L772.6 436 M754.6 631V746.7 M929.5 319.5V436 M754.6 631L929.5 319.5 M754.6 746.7L928.5 436 M910.5 631V746.7 M1085.4 319.5V436 M910.5 631L1085.4 319.5 M910.5 746.7L1084.4 436 M1066.4 631V746.7 M1241.3 319.5V436 M1066.4 631L1241.3 319.5 M1066.4 746.7L1240.3 436 M1222.3 631V746.7 M1397.2 319.5V436 M1222.3 631L1397.2 319.5 M1222.3 746.7L1396.2 436 M1378.2 631V746.7 M1553.1 319.5V436 M1378.2 631L1553.1 319.5 M1378.2 746.7L1552.1 436 M1534.1 631V746.7 M1709.0 319.5V436 M1534.1 631L1709.0 319.5 M1534.1 746.7L1708.0 436" stroke="#3c46ff" stroke-width="1.25" fill="none" stroke-dasharray="6,2.3,1.2,2,1.2,2.3"/>
<path d="M765.4 400.3H1652.8" stroke="#444" stroke-width="1"/>
<path d="M727.8 400.3H765.4 M882.6 400.3H920.6 M1036.9 400.3H1074.9 M1191.2 400.3H1229.2 M1345.5 400.3H1383.5 M1499.8 400.3H1537.8" stroke="#0a8a0a" stroke-width="2.5"/>
<path d="M843.1 400.3H882.6 M997.4 400.3H1036.9 M1151.7 400.3H1191.2 M1306.0 400.3H1345.5 M1460.3 400.3H1499.8 M1614.6 400.3H1654.1" stroke="#1010ff" stroke-width="2.5"/>
<polygon points="800.0,480.5 800.0,383.4 788.5,402.0 788.5,384.0 820.0,327.0 820.0,346.0 808.7,367.0 808.7,464.0" fill="none" stroke="#7a7a7a" stroke-width="1.6"/>
<path d="M788.5 400V386 M786.0 389l2.5-3 2.5 3" stroke="#e02020" stroke-width="1" fill="none"/>
<path d="M788.5 400L795.5 389 M793.0 392l2.5-3 0.5 4" stroke="#2020e0" stroke-width="1" fill="none"/>
<path d="M788.5 400.3H801.5 M798.5 397.5l3 2.8-3 2.8" stroke="#20a020" stroke-width="1" fill="none"/>
<polygon points="954.3,480.5 954.3,383.4 942.8,402.0 942.8,384.0 974.3,327.0 974.3,346.0 963.0,367.0 963.0,464.0" fill="none" stroke="#7a7a7a" stroke-width="1.6"/>
<path d="M942.8 400V386 M940.3 389l2.5-3 2.5 3" stroke="#e02020" stroke-width="1" fill="none"/>
<path d="M942.8 400L949.8 389 M947.3 392l2.5-3 0.5 4" stroke="#2020e0" stroke-width="1" fill="none"/>
<path d="M942.8 400.3H955.8 M952.8 397.5l3 2.8-3 2.8" stroke="#20a020" stroke-width="1" fill="none"/>
<polygon points="1108.6,480.5 1108.6,383.4 1097.1,402.0 1097.1,384.0 1128.6,327.0 1128.6,346.0 1117.3,367.0 1117.3,464.0" fill="none" stroke="#7a7a7a" stroke-width="1.6"/>
<path d="M1097.1 400V386 M1094.6 389l2.5-3 2.5 3" stroke="#e02020" stroke-width="1" fill="none"/>
<path d="M1097.1 400L1104.1 389 M1101.6 392l2.5-3 0.5 4" stroke="#2020e0" stroke-width="1" fill="none"/>
<path d="M1097.1 400.3H1110.1 M1107.1 397.5l3 2.8-3 2.8" stroke="#20a020" stroke-width="1" fill="none"/>
<polygon points="1262.9,480.5 1262.9,383.4 1251.4,402.0 1251.4,384.0 1282.9,327.0 1282.9,346.0 1271.6,367.0 1271.6,464.0" fill="none" stroke="#7a7a7a" stroke-width="1.6"/>
<path d="M1251.4 400V386 M1248.9 389l2.5-3 2.5 3" stroke="#e02020" stroke-width="1" fill="none"/>
<path d="M1251.4 400L1258.4 389 M1255.9 392l2.5-3 0.5 4" stroke="#2020e0" stroke-width="1" fill="none"/>
<path d="M1251.4 400.3H1264.4 M1261.4 397.5l3 2.8-3 2.8" stroke="#20a020" stroke-width="1" fill="none"/>
<polygon points="1417.2,480.5 1417.2,383.4 1405.7,402.0 1405.7,384.0 1437.2,327.0 1437.2,346.0 1425.9,367.0 1425.9,464.0" fill="none" stroke="#7a7a7a" stroke-width="1.6"/>
<path d="M1405.7 400V386 M1403.2 389l2.5-3 2.5 3" stroke="#e02020" stroke-width="1" fill="none"/>
<path d="M1405.7 400L1412.7 389 M1410.2 392l2.5-3 0.5 4" stroke="#2020e0" stroke-width="1" fill="none"/>
<path d="M1405.7 400.3H1418.7 M1415.7 397.5l3 2.8-3 2.8" stroke="#20a020" stroke-width="1" fill="none"/>
<polygon points="1571.5,480.5 1571.5,383.4 1560.0,402.0 1560.0,384.0 1591.5,327.0 1591.5,346.0 1580.2,367.0 1580.2,464.0" fill="none" stroke="#7a7a7a" stroke-width="1.6"/>
<path d="M1560.0 400V386 M1557.5 389l2.5-3 2.5 3" stroke="#e02020" stroke-width="1" fill="none"/>
<path d="M1560.0 400L1567.0 389 M1564.5 392l2.5-3 0.5 4" stroke="#2020e0" stroke-width="1" fill="none"/>
<path d="M1560.0 400.3H1573.0 M1570.0 397.5l3 2.8-3 2.8" stroke="#20a020" stroke-width="1" fill="none"/>
<polygon points="857.0,421.6 815.4,495.9 812.0,494.0 810.2,509.0 822.1,499.6 818.7,497.7 860.4,423.4" fill="#fff" stroke="#1a1aff" stroke-width="1.15"/>
<polygon points="1009.7,421.6 968.1,495.9 964.7,494.0 962.9,509.0 974.8,499.6 971.4,497.7 1013.1,423.4" fill="#fff" stroke="#1a1aff" stroke-width="1.15"/>
<polygon points="1165.9,421.6 1124.3,495.9 1120.9,494.0 1119.1,509.0 1131.0,499.6 1127.6,497.7 1169.3,423.4" fill="#fff" stroke="#1a1aff" stroke-width="1.15"/>
<polygon points="1324.5,421.6 1282.9,495.9 1279.5,494.0 1277.7,509.0 1289.6,499.6 1286.2,497.7 1327.9,423.4" fill="#fff" stroke="#1a1aff" stroke-width="1.15"/>
<polygon points="1478.0,421.6 1436.4,495.9 1433.0,494.0 1431.2,509.0 1443.1,499.6 1439.7,497.7 1481.4,423.4" fill="#fff" stroke="#1a1aff" stroke-width="1.15"/>
<polygon points="1619.9,421.6 1578.3,495.9 1574.9,494.0 1573.1,509.0 1585.0,499.6 1581.6,497.7 1623.3,423.4" fill="#fff" stroke="#1a1aff" stroke-width="1.15"/>
<polygon points="727.5,421.1 685.9,495.4 682.5,493.5 680.7,508.5 692.6,499.1 689.2,497.2 730.9,422.9" fill="#fff" stroke="#3a6a30" stroke-width="1.15"/>
<polygon points="884.9,421.1 843.3,495.4 839.9,493.5 838.1,508.5 850.0,499.1 846.6,497.2 888.3,422.9" fill="#fff" stroke="#3a6a30" stroke-width="1.15"/>
<polygon points="1041.5,421.1 999.9,495.4 996.5,493.5 994.7,508.5 1006.6,499.1 1003.2,497.2 1044.9,422.9" fill="#fff" stroke="#3a6a30" stroke-width="1.15"/>
<polygon points="1193.2,421.1 1151.6,495.4 1148.2,493.5 1146.4,508.5 1158.3,499.1 1154.9,497.2 1196.6,422.9" fill="#fff" stroke="#3a6a30" stroke-width="1.15"/>
<polygon points="1352.5,421.1 1310.9,495.4 1307.5,493.5 1305.7,508.5 1317.6,499.1 1314.2,497.2 1355.9,422.9" fill="#fff" stroke="#3a6a30" stroke-width="1.15"/>
<polygon points="1509.1,421.1 1467.5,495.4 1464.1,493.5 1462.3,508.5 1474.2,499.1 1470.8,497.2 1512.5,422.9" fill="#fff" stroke="#3a6a30" stroke-width="1.15"/>
<path d="M597.0 754 C599.0 766 617.0 769.5 642.0 769.5 L646.0 769.5 C668.0 769.5 674.0 774 674.0 788 C674.0 774 680.0 769.5 702.0 769.5 L705.9 769.5 C730.9 769.5 748.9 766 750.9 754 M752.9 754 C754.9 766 772.9 769.5 797.9 769.5 L801.8 769.5 C823.8 769.5 829.8 774 829.8 788 C829.8 774 835.8 769.5 857.8 769.5 L861.8 769.5 C886.8 769.5 904.8 766 906.8 754 M908.8 754 C910.8 766 928.8 769.5 953.8 769.5 L957.8 769.5 C979.8 769.5 985.8 774 985.8 788 C985.8 774 991.8 769.5 1013.8 769.5 L1017.7 769.5 C1042.7 769.5 1060.7 766 1062.7 754 M1064.7 754 C1066.7 766 1084.7 769.5 1109.7 769.5 L1113.7 769.5 C1135.7 769.5 1141.7 774 1141.7 788 C1141.7 774 1147.7 769.5 1169.7 769.5 L1173.6 769.5 C1198.6 769.5 1216.6 766 1218.6 754 M1220.6 754 C1222.6 766 1240.6 769.5 1265.6 769.5 L1269.5 769.5 C1291.5 769.5 1297.5 774 1297.5 788 C1297.5 774 1303.5 769.5 1325.5 769.5 L1329.5 769.5 C1354.5 769.5 1372.5 766 1374.5 754 M1376.5 754 C1378.5 766 1396.5 769.5 1421.5 769.5 L1425.5 769.5 C1447.5 769.5 1453.5 774 1453.5 788 C1453.5 774 1459.5 769.5 1481.5 769.5 L1485.4 769.5 C1510.4 769.5 1528.4 766 1530.4 754" stroke="#555" stroke-width="1.3" fill="none"/>
</svg>
<div class="lb" style="left:587.8px;top:800.5px">Стержневой</div>
<div class="lb" style="left:597.0px;top:830.0px">аналог №1</div>
<div class="lb" style="left:763.0px;top:798.5px">Стержневой</div>
<div class="lb" style="left:772.5px;top:827.7px">аналог №2</div>
<div class="lb" style="left:921.7px;top:800.2px">Стержневой</div>
<div class="lb" style="left:931.6px;top:829.7px">аналог №3</div>
<div class="lb" style="left:1075.0px;top:800.2px">Стержневой</div>
<div class="lb" style="left:1085.3px;top:829.7px">аналог №4</div>
<div class="lb" style="left:1243.1px;top:797.3px">Стержневой</div>
<div class="lb" style="left:1253.1px;top:827.8px">аналог №5</div>
<div class="lb" style="left:1397.0px;top:800.2px">Стержневой</div>
<div class="lb" style="left:1407.0px;top:829.7px">аналог №6</div>
<!-- view frame -->
<div class="a" style="left:583px;top:161px;width:1px;height:709px;background:#c8c8c8"></div>
<div class="a" style="left:1722px;top:161px;width:2px;height:709px;background:#e4e4e4"></div>
<div class="a" style="left:584px;top:869px;width:1140px;height:1px;background:#d8d8d8"></div>
<!-- bottom toolbar -->
<div class="a" style="left:584px;top:870px;width:1142px;height:45px;background:linear-gradient(#d3d7dd,#c4c9cf 50%,#a9aeb5)"></div>
<div class="a" style="left:584px;top:913px;width:1142px;height:2px;background:#3a3e46"></div>
<div class="a" style="left:584px;top:915px;width:627px;height:19px;background:#2e2e2e"></div>
<div class="a" style="left:584px;top:915px;width:627px;height:6px;background:#3c4049"></div>
<svg class="a" style="left:584px;top:870px" width="1142" height="45">
 <g transform="translate(6,9)"><rect x="1.5" y="1.5" width="9" height="10" fill="none" stroke="#1a70d8" stroke-width="2"/><rect x="1.5" y="13" width="9" height="12" fill="none" stroke="#d81a6a" stroke-width="2"/><path d="M16 5 C24 9 24 19 16 23" fill="none" stroke="#40a040" stroke-width="1.5"/><path d="M14 5l4-3v6z M14 23l4-3v6z" fill="#40a040"/></g>
 <g transform="translate(44,9)"><path d="M3 10h22M3 19h22M3 10v16M12 10v16M21 10v16" stroke="#2a3a5a" stroke-width="2" fill="none"/><rect x="3" y="10" width="9" height="9" fill="none" stroke="#e02020" stroke-width="2"/><circle cx="3" cy="10" r="2.5" fill="#fff" stroke="#e02020"/><circle cx="12" cy="19" r="2.5" fill="#fff" stroke="#e02020"/><circle cx="21" cy="10" r="2.5" fill="#a0c060"/><circle cx="21" cy="19" r="2.5" fill="#a0c060"/><path d="M12 12 C10 2 22 0 22 8" fill="none" stroke="#e02020" stroke-width="2.5"/></g>
 <g transform="translate(83,8)"><rect x="8" y="2" width="6" height="16" rx="3" fill="#3a9a3a"/><path d="M5 18h12v3H5z" fill="#555"/><path d="M5 21l-1 8h14l-1-8z" fill="#d8dcc0"/><path d="M0 29h8" stroke="#eee"/></g>
 <rect x="120" y="10" width="1.5" height="25" fill="#6a7078"/>
 <g transform="translate(133,8)"><rect x="2.5" y="3" width="9" height="9" fill="none" stroke="#1a70d8" stroke-width="2"/><rect x="2.5" y="13" width="9" height="12" fill="none" stroke="#d81a6a" stroke-width="2"/><path d="M0 0L14 14M14 0L0 14" stroke="#3a8a3a" stroke-width="1.5"/></g>
 <g transform="translate(170,8)" opacity=".55"><path d="M3 4v22h22" fill="none" stroke="#777" stroke-width="1.5"/><rect x="14" y="3" width="8" height="8" fill="none" stroke="#5aa0e0" stroke-width="1.5"/><rect x="14" y="13" width="8" height="9" fill="none" stroke="#e05a9a" stroke-width="1.5"/></g>
 <g transform="translate(212,8)"><rect x="2.5" y="3" width="9" height="10" fill="none" stroke="#1a70d8" stroke-width="2"/><rect x="2.5" y="14" width="9" height="11" fill="none" stroke="#d81a6a" stroke-width="2"/><path d="M0 13L14 27M14 13L0 27" stroke="#3a8a3a" stroke-width="1.5"/></g>
 <g transform="translate(251,8)"><rect x="8" y="13" width="9" height="12" fill="none" stroke="#d81a6a" stroke-width="2"/><path d="M8 4h12v6" fill="none" stroke="#5aa0a0" stroke-width="1.5"/><path d="M16 4 C8 1 2 6 4 14" fill="none" stroke="#2a4a9a" stroke-width="2.5"/><path d="M0 12l4 5 4-5z" fill="#2a4a9a"/></g>
 <g transform="translate(290,8)" stroke="#5a6a8a" stroke-width="1.8" fill="none"><path d="M2 8h16v20M2 8v20M10 8v20M2 17h16M6 2h16v18M2 8l4-6M18 8l4-6"/></g>
 <g transform="translate(328,8)" stroke="#7a8a9a" stroke-width="1.5" fill="none"><path d="M2 8h16v20H2zM2 17h16M10 8v20M6 2h16v18M2 8l4-6M18 8l4-6"/><path d="M2 17h16l4-6H6z" stroke="#e03030"/></g>
 <rect x="364" y="10" width="1.5" height="25" fill="#6a7078"/>
 <g transform="translate(376,8)"><circle cx="10" cy="11" r="8" fill="#d8ecf8" stroke="#5a7a9a" stroke-width="2"/><path d="M15 17l8 8" stroke="#222" stroke-width="4" stroke-linecap="round"/></g>
 <g transform="translate(415,8)"><circle cx="10" cy="11" r="8" fill="#d8ecf8" stroke="#5a7a9a" stroke-width="2"/><path d="M15 17l8 8" stroke="#222" stroke-width="4" stroke-linecap="round"/><path d="M12 6l10 10M22 6L12 16" stroke="#e02020" stroke-width="3"/></g>
 <rect x="451" y="10" width="1.5" height="25" fill="#6a7078"/>
 <g transform="translate(461,7)"><path d="M2 6 L10 0 L20 16 L14 22z" fill="#6a6a6a"/><circle cx="19" cy="21" r="8" fill="#f0c020"/><circle cx="20" cy="22" r="5" fill="#ffee80"/><path d="M14 16l10-6" stroke="#d04020" stroke-width="3"/></g>
 <g transform="translate(502,8)"><text x="9" y="14" font-family="Liberation Serif" font-style="italic" font-size="14" fill="#2a2a7a">L</text><path d="M2 20h22" stroke="#3a6a3a" stroke-dasharray="2,2"/><circle cx="2" cy="20" r="2" fill="#fff" stroke="#40a040"/><circle cx="24" cy="20" r="2" fill="#fff" stroke="#40a040"/></g>
 <path d="M540 19h8l-4 5z" fill="#555"/>
 <g transform="translate(562,8)"><path d="M2 27 L22 4 L26 8 L6 30z" fill="#f0c020" stroke="#a07010"/><path d="M2 27l-1 4 4-2z" fill="#333"/></g>
 <g transform="translate(599,6)"><path d="M6 3 C12 0 18 6 26 3 V17 C18 20 12 14 6 17z" fill="#d82020"/><path d="M6 3v26" stroke="#555" stroke-width="2"/><path d="M10 28 L24 12 L27 15 L13 31z" fill="#f0c020" stroke="#a07010"/></g>
 <rect x="634" y="0" width="18" height="43" fill="#9aa0a8"/>
 <rect x="658" y="0" width="484" height="43" fill="#cbd0d6" opacity=".0"/>
 <path d="M640 34h10M640 38l4 3 6-6" stroke="#fff" stroke-width="1.3" fill="none"/>
 <path d="M687 10v20" stroke="#333" stroke-width="2" stroke-dasharray="1.5,1.5"/>
 <rect x="662" y="4" width="38" height="38" rx="2" fill="#ffc878"/><rect x="662" y="4" width="38" height="19" rx="2" fill="#ffe0a8"/>
 <g transform="translate(666,8)"><path d="M5 28V6M5 28h24M5 28L24 10" stroke="#2a8a2a" stroke-width="1.8" fill="none"/><path d="M5 28V6" stroke="#e02020" stroke-width="1.8"/><path d="M5 28L24 10" stroke="#2a3aa0" stroke-width="1.8"/><path d="M2 9l3-6 3 6z" fill="#e02020"/><path d="M26 25l6 3-6 3z" fill="#2a8a2a"/><path d="M20 9l6-2-2 6z" fill="#2a3aa0"/></g>
 <g transform="translate(706,8)"><path d="M14 20V6" stroke="#e02020" stroke-width="1.5"/><path d="M14 20l12-6" stroke="#2a8a2a" stroke-width="1.5"/><path d="M14 20L2 14" stroke="#2a3aa0" stroke-width="1.5"/><text x="16" y="8" font-size="8" font-family="Liberation Sans" fill="#444">Z</text><text x="0" y="14" font-size="8" font-family="Liberation Sans" fill="#444">Y</text><text x="22" y="16" font-size="8" font-family="Liberation Sans" fill="#444">X</text></g>
 <g transform="translate(746,8)"><path d="M5 27V4" stroke="#e02020" stroke-width="1.8"/><path d="M5 27h22" stroke="#2a8a2a" stroke-width="1.8"/><path d="M2 7l3-6 3 6z" fill="#e02020"/><path d="M25 24l6 3-6 3z" fill="#2a8a2a"/><text x="9" y="17" font-size="12" font-family="Liberation Sans" fill="#4a4a4a">XZ</text><circle cx="5" cy="27" r="2" fill="#2a3aa0"/></g>
 <path d="M786 19h8l-4 5z" fill="#555"/>
 <g transform="translate(806,8)"><path d="M5 27V4" stroke="#2a3aa0" stroke-width="1.8"/><path d="M5 27h22" stroke="#2a8a2a" stroke-width="1.8"/><path d="M2 7l3-6 3 6z" fill="#2a3aa0"/><path d="M25 24l6 3-6 3z" fill="#2a8a2a"/><text x="9" y="17" font-size="12" font-family="Liberation Sans" fill="#4a4a4a">XY</text><circle cx="5" cy="27" r="2" fill="#e02020"/></g>
 <path d="M845 19h8l-4 5z" fill="#555"/>
 <g transform="translate(866,8)"><path d="M5 27V4" stroke="#e02020" stroke-width="1.8"/><path d="M5 27h22" stroke="#2a3aa0" stroke-width="1.8"/><path d="M2 7l3-6 3 6z" fill="#e02020"/><path d="M25 24l6 3-6 3z" fill="#2a3aa0"/><text x="9" y="17" font-size="12" font-family="Liberation Sans" fill="#4a4a4a">YZ</text><circle cx="5" cy="27" r="2" fill="#2a8a2a"/></g>
 <path d="M905 19h8l-4 5z" fill="#555"/>
 <g transform="translate(923,11)"><path d="M4 0h24l-6 18H0z" fill="#c8e0f0"/><path d="M8 6h18M5 12h18M12 2L7 17M20 2L15 17" stroke="#2a3a6a" stroke-width="2"/></g>
 <g transform="translate(965,9)"><path d="M10 5 A11 11 0 1 0 18 3" fill="none" stroke="#2a4a8a" stroke-width="3"/><path d="M4 6l8-5v9z" fill="#2a4a8a"/></g>
 <path d="M1004 19h8l-4 5z" fill="#555"/>
 <g transform="translate(1020,7)"><path d="M3 27V4M3 27h24M3 27L21 9" stroke="#e02020" stroke-width="1.8" fill="none"/><path d="M0 7l3-6 3 6z M24 24l6 3-6 3z M18 9l6-3-2 6z" fill="#e02020"/></g>
 <rect x="1058" y="0" width="18" height="43" fill="#9aa0a8"/>
 <path d="M1061 34h10M1061 38l4 3 6-6" stroke="#fff" stroke-width="1.3" fill="none"/>
 <path d="M1081 8v20" stroke="#333" stroke-width="2" stroke-dasharray="1.5,1.5"/>
 <rect x="1123" y="0" width="19" height="43" fill="#8a9098"/>
 <path d="M1128 20h10M1128 24l4 3 6-6" stroke="#fff" stroke-width="1.3" fill="none"/><path d="M1129 6l4 3-4 3zM1134 6l4 3-4 3z" fill="#fff"/>
</svg>
<!-- status bar -->
<div class="a" style="left:1211px;top:915px;width:515px;height:19px;background:linear-gradient(#c8ccd1,#aeb2b8)"></div>
<div class="a" style="left:1211px;top:915px;width:2px;height:19px;background:#333"></div>
<div class="a" style="left:1218px;top:918px;width:63px;height:16px;background:linear-gradient(#d8dce0,#c4c8cc)"></div>
<svg class="a" style="left:1218px;top:916px" width="200" height="18">
 <path d="M4 3 L14 14 M14 3 L4 14" stroke="#3a8a3a" stroke-width="3"/><path d="M6 16 L14 6" stroke="#f0c020" stroke-width="3"/><text x="10" y="16" font-size="8" font-family="Liberation Sans" fill="#333">№</text>
 <path d="M25 14h12l-6-8z" fill="#3a9a3a"/><path d="M45 5h14l-7 9z" fill="#999"/>
 <path d="M122 17 L134 4" stroke="#c09010" stroke-width="3"/><path d="M128 4 C132 1 138 3 139 7 L135 8 C133 6 131 6 130 7z" fill="#888"/>
</svg>
<div class="a" style="left:1282px;top:917px;width:49px;height:17px;background:#e8e8e8;border:1px solid #b0b0b0"></div>
<div class="t" style="left:1285px;top:919px;font-size:11px;color:#1a1a5a">1.</div><div class="dd" style="left:1321px;top:924px"></div>
<div class="a" style="left:1333px;top:916px;width:2px;height:18px;background:#333"></div>
<div class="a" style="left:1358px;top:917px;width:50px;height:17px;background:#e8e8e8;border:1px solid #b0b0b0"></div>
<div class="t" style="left:1362px;top:919px;font-size:11px;color:#1a1a5a">1.</div><div class="dd" style="left:1398px;top:924px"></div>
<div class="a" style="left:1409px;top:916px;width:2px;height:18px;background:#333"></div>
<div class="t" style="left:1414px;top:919px;font-size:10px;color:#222">Уз.: 4342 / 4342</div>
<div class="a" style="left:1531px;top:916px;width:2px;height:18px;background:#333"></div>
<div class="t" style="left:1534px;top:919px;font-size:10px;color:#222">Эл.: 0 / 2694</div>
<div class="a" style="left:1650px;top:916px;width:2px;height:18px;background:#333"></div>
<div class="t" style="left:1654px;top:919px;font-size:10px;color:#222">Загр.: 1 / 1</div>

<!-- ===== DIALOG 1 ===== -->
<div class="dlg" style="left:1px;top:2px;width:582px;height:447px"></div>
<div class="a" style="left:2px;top:3px;width:580px;height:30px;background:#fff"></div>
<div class="a" style="left:10px;top:10px;width:15px;height:13px;border:1px solid #8a8a8a;background:linear-gradient(90deg,#2e7fb8 0,#3aa35a 50%,#e8e8e8 55%,#e8e8e8 100%)"></div>
<div class="t" style="left:31px;top:12px;font-size:12px;line-height:15px;color:#9b9b9b">Стержневые аналоги</div>
<svg class="a" style="left:561px;top:11px" width="12" height="12"><path d="M1 1L11 11M11 1L1 11" stroke="#333" stroke-width="1"/></svg>
<!-- tabs -->
<div class="a" style="left:4px;top:55px;width:576px;height:2px;background:#d9d9d9"></div>
<div class="tab" style="left:6px;top:37px;width:41px;height:19px"></div>
<div class="tab" style="left:47px;top:37px;width:41px;height:19px"></div>
<div class="tab on" style="left:88px;top:35px;width:46px;height:22px;border-color:#e3e3e3"></div>
<!-- group outer -->
<div class="gb" style="left:8px;top:67px;width:571px;height:351px"></div>
<div class="lbl" style="left:14px;top:60px">Настройки создания стержневых аналогов</div>
<div class="t" style="left:15px;top:78px">Создавать стержневые аналоги по целевым стрежням из исходных элементов</div>
<div class="cb" style="left:28px;top:99px"></div>
<div class="t" style="left:43px;top:99px">Распознавать форму поперечного сечения из элементов-пластин</div>
<!-- group 1 -->
<div class="gb" style="left:14px;top:126px;width:560px;height:135px"></div>
<div class="lbl" style="left:20px;top:119px">Целевые стержни</div>
<div class="inp" style="left:19px;top:140px;width:475px;height:114px"></div>
<div class="t" style="left:25px;top:143px">2689-2694</div>
<div class="btn" style="left:500px;top:141px;width:31px;height:19px;line-height:17px">&lt;&lt;</div>
<div class="btn" style="left:536px;top:141px;width:31px;height:19px;line-height:17px">&gt;&gt;</div>
<!-- group 2 -->
<div class="gb" style="left:14px;top:276px;width:560px;height:135px"></div>
<div class="lbl" style="left:20px;top:269px">Исходные элементы</div>
<div class="inp" style="left:19px;top:290px;width:475px;height:114px"></div>
<div class="t" style="left:25px;top:293px">1-2688</div>
<div class="btn" style="left:500px;top:291px;width:31px;height:18px;line-height:16px;border:2px solid #0078d7;background:#e5f1fb">&lt;&lt;</div>
<div class="btn" style="left:536px;top:291px;width:31px;height:18px;line-height:16px">&gt;&gt;</div>
<!-- bottom buttons -->
<div class="btn" style="left:448px;top:421px;width:31px;height:21px"></div>
<div class="btn" style="left:485px;top:421px;width:31px;height:21px"></div>
<div class="btn" style="left:521px;top:421px;width:31px;height:21px"></div>

<!-- ===== DIALOG 2 ===== -->
<div class="dlg" style="left:1px;top:485px;width:583px;height:460px"></div>
<div class="a" style="left:2px;top:486px;width:581px;height:30px;background:#fff"></div>
<div class="a" style="left:10px;top:493px;width:15px;height:13px;border:1px solid #8a8a8a;background:linear-gradient(90deg,#2e7fb8 0,#3aa35a 50%,#e8e8e8 55%,#e8e8e8 100%)"></div>
<div class="t" style="left:31px;top:494px;font-size:12px;line-height:15px;color:#9b9b9b">Стержневые аналоги</div>
<svg class="a" style="left:562px;top:494px" width="12" height="12"><path d="M1 1L11 11M11 1L1 11" stroke="#333" stroke-width="1"/></svg>
<div class="a" style="left:4px;top:539px;width:576px;height:2px;background:#d9d9d9"></div>
<div class="tab on" style="left:4px;top:518px;width:46px;height:22px;border-color:#e3e3e3"></div>
<div class="tab" style="left:50px;top:520px;width:39px;height:19px"></div>
<div class="tab" style="left:89px;top:520px;width:41px;height:19px"></div>
<!-- group Стержневой аналог -->
<div class="gb" style="left:8px;top:550px;width:572px;height:160px"></div>
<div class="lbl" style="left:14px;top:543px">Стержневой аналог</div>
<div class="t" style="left:15px;top:561px">A :&nbsp; Номер целевого стержня</div>
<div class="inp" style="left:216px;top:558px;width:181px;height:21px"></div>
<div class="btn" style="left:403px;top:558px;width:31px;height:20px;line-height:18px">&lt;&lt;</div>
<div class="btn" style="left:439px;top:558px;width:31px;height:20px;line-height:18px">&gt;&gt;</div>
<div class="btn" style="left:537px;top:558px;width:31px;height:20px"></div>
<div class="gb" style="left:14px;top:585px;width:463px;height:53px"></div>
<div class="lbl" style="left:20px;top:578px">1 :&nbsp; Начальное поперечное сечение</div>
<div class="t" style="left:22px;top:596px">N :&nbsp; Номера узлов</div>
<div class="inp" style="left:155px;top:593px;width:241px;height:20px"></div>
<div class="btn" style="left:403px;top:593px;width:31px;height:19px;line-height:17px">&lt;&lt;</div>
<div class="btn" style="left:439px;top:593px;width:31px;height:19px;line-height:17px">&gt;&gt;</div>
<div class="t" style="left:22px;top:617px">E :&nbsp; Номера элементов</div>
<div class="inp" style="left:155px;top:614px;width:241px;height:20px"></div>
<div class="btn" style="left:403px;top:614px;width:31px;height:19px;line-height:17px">&lt;&lt;</div>
<div class="btn" style="left:439px;top:614px;width:31px;height:19px;line-height:17px">&gt;&gt;</div>
<div class="gb" style="left:14px;top:650px;width:463px;height:54px"></div>
<div class="lbl" style="left:20px;top:643px">2 :&nbsp; Конечное поперечное сечение</div>
<div class="t" style="left:22px;top:661px">N :&nbsp; Номера узлов</div>
<div class="inp" style="left:155px;top:658px;width:241px;height:20px"></div>
<div class="btn" style="left:403px;top:658px;width:31px;height:19px;line-height:17px">&lt;&lt;</div>
<div class="btn" style="left:439px;top:658px;width:31px;height:19px;line-height:17px">&gt;&gt;</div>
<div class="t" style="left:22px;top:682px">E :&nbsp; Номера элементов</div>
<div class="inp" style="left:155px;top:680px;width:241px;height:20px"></div>
<div class="btn" style="left:403px;top:680px;width:31px;height:19px;line-height:17px">&lt;&lt;</div>
<div class="btn" style="left:439px;top:680px;width:31px;height:19px;line-height:17px">&gt;&gt;</div>
<div class="btn" style="left:482px;top:594px;width:47px;height:104px"></div>
<div class="btn" style="left:537px;top:584px;width:31px;height:21px"></div>
<div class="btn" style="left:537px;top:610px;width:31px;height:21px"></div>
<!-- list group -->
<div class="gb" style="left:8px;top:720px;width:572px;height:182px"></div>
<div class="lbl" style="left:14px;top:713px">Список стержневых аналогов</div>
<div class="a" style="left:14px;top:731px;width:513px;height:164px;background:#fff;border:1px solid #828790"></div>
<!-- table -->
<div class="a" style="left:97.5px;top:733px;width:1px;height:24px;background:#ececec"></div>
<div class="a" style="left:98.0px;top:757px;width:1px;height:136px;background:#ececec"></div>
<div class="a" style="left:179.0px;top:733px;width:1px;height:24px;background:#ececec"></div>
<div class="a" style="left:179.5px;top:757px;width:1px;height:136px;background:#ececec"></div>
<div class="a" style="left:260.5px;top:733px;width:1px;height:24px;background:#ececec"></div>
<div class="a" style="left:261.0px;top:757px;width:1px;height:136px;background:#ececec"></div>
<div class="a" style="left:342.0px;top:733px;width:1px;height:24px;background:#ececec"></div>
<div class="a" style="left:342.5px;top:757px;width:1px;height:136px;background:#ececec"></div>
<div class="a" style="left:423.0px;top:733px;width:1px;height:24px;background:#ececec"></div>
<div class="a" style="left:423.5px;top:757px;width:1px;height:136px;background:#ececec"></div>
<div class="a" style="left:504.5px;top:733px;width:1px;height:24px;background:#ececec"></div>
<div class="a" style="left:505.0px;top:757px;width:1px;height:136px;background:#ececec"></div>
<div class="a" style="left:15px;top:773.4px;width:490px;height:1px;background:#e8e8e8"></div>
<div class="a" style="left:15px;top:790.5px;width:490px;height:1px;background:#e8e8e8"></div>
<div class="a" style="left:15px;top:807.7px;width:490px;height:1px;background:#e8e8e8"></div>
<div class="a" style="left:15px;top:824.9px;width:490px;height:1px;background:#e8e8e8"></div>
<div class="a" style="left:15px;top:842.0px;width:490px;height:1px;background:#e8e8e8"></div>
<div class="a" style="left:15px;top:859.1px;width:490px;height:1px;background:#e8e8e8"></div>
<div class="a" style="left:15px;top:876.3px;width:490px;height:1px;background:#e8e8e8"></div>
<div class="t" style="left:21.5px;top:737.8px">ID</div>
<div class="t" style="left:103.0px;top:737.8px">A</div>
<div class="t" style="left:185.0px;top:737.8px">1:N</div>
<div class="t" style="left:266.6px;top:737.8px">1:E</div>
<div class="t" style="left:347.6px;top:737.8px">2:N</div>
<div class="t" style="left:429.3px;top:737.8px">2:E</div>
<div class="t" style="left:21.5px;top:758.6px">1</div>
<div class="t" style="left:103.0px;top:758.6px">2689</div>
<div class="t" style="left:185.0px;top:758.6px">1 51 101 15...</div>
<div class="t" style="left:266.6px;top:758.6px">1 51 101 15...</div>
<div class="t" style="left:347.6px;top:758.6px">15 65 115 1...</div>
<div class="t" style="left:429.3px;top:758.6px">14 64 114 1...</div>
<div class="t" style="left:21.5px;top:775.8px">2</div>
<div class="t" style="left:103.0px;top:775.8px">2690</div>
<div class="t" style="left:185.0px;top:775.8px">15 65 115 1...</div>
<div class="t" style="left:266.6px;top:775.8px">15 65 115 1...</div>
<div class="t" style="left:347.6px;top:775.8px">29 79 129 1...</div>
<div class="t" style="left:429.3px;top:775.8px">28 78 128 1...</div>
<div class="t" style="left:21.5px;top:792.9px">3</div>
<div class="t" style="left:103.0px;top:792.9px">2691</div>
<div class="t" style="left:185.0px;top:792.9px">29 79 129 1...</div>
<div class="t" style="left:266.6px;top:792.9px">29 79 129 1...</div>
<div class="t" style="left:347.6px;top:792.9px">43 93 143 1...</div>
<div class="t" style="left:429.3px;top:792.9px">42 92 142 1...</div>
<div class="t" style="left:21.5px;top:810.1px">4</div>
<div class="t" style="left:103.0px;top:810.1px">2692</div>
<div class="t" style="left:185.0px;top:810.1px">43 93 143 1...</div>
<div class="t" style="left:266.6px;top:810.1px">43 93 143 1...</div>
<div class="t" style="left:347.6px;top:810.1px">2590 2625 ...</div>
<div class="t" style="left:429.3px;top:810.1px">1606 1640 ...</div>
<div class="t" style="left:21.5px;top:827.2px">5</div>
<div class="t" style="left:103.0px;top:827.2px">2693</div>
<div class="t" style="left:185.0px;top:827.2px">2590 2625 ...</div>
<div class="t" style="left:266.6px;top:827.2px">1607 1641 ...</div>
<div class="t" style="left:347.6px;top:827.2px">2604 2639 ...</div>
<div class="t" style="left:429.3px;top:827.2px">1620 1654 ...</div>
<div class="t" style="left:21.5px;top:844.4px">6</div>
<div class="t" style="left:103.0px;top:844.4px">2694</div>
<div class="t" style="left:185.0px;top:844.4px">2604 2639 ...</div>
<div class="t" style="left:266.6px;top:844.4px">1621 1655 ...</div>
<div class="t" style="left:347.6px;top:844.4px">2618 2653 ...</div>
<div class="t" style="left:429.3px;top:844.4px">1634 1668 ...</div>
<div class="btn" style="left:537px;top:732px;width:31px;height:21px"></div>
<div class="btn" style="left:537px;top:758px;width:31px;height:21px"></div>
<div class="btn" style="left:537px;top:784px;width:31px;height:21px"></div>
<div class="btn" style="left:537px;top:810px;width:31px;height:21px"></div>
<div class="cb" style="left:14px;top:910px"></div>
<div class="t" style="left:29px;top:910px">Список для фрагмента</div>
<div class="cb" style="left:174px;top:910px"></div>
<div class="t" style="left:189px;top:910px">Отмечать вместе с исходными узлами и элементами</div>
<div class="btn" style="left:485px;top:906px;width:31px;height:21px"></div>
<div class="btn" style="left:522px;top:906px;width:31px;height:21px"></div>
<svg width="0" height="0" style="position:absolute">
<defs>
<symbol id="ica" viewBox="0 0 44 44">
 <g stroke="#2a4060" stroke-width="1.6" fill="#e6eef6"><path d="M3 7h10v30H3z"/><path d="M13 7h10v30H13z"/><path d="M3 7l4-4h20l-4 4z" fill="#c8d8e8"/><path d="M23 7l4-4v30l-4 4z" fill="#b0c4d8"/></g>
 <path d="M3 14h20M3 22h20M3 30h20" stroke="#2a4060" stroke-width="1.5"/>
 <path d="M14 28c-1 8 3 12 12 11" fill="none" stroke="#3a307a" stroke-width="4"/><path d="M24 32l8 7-8 7z" fill="#3a307a"/>
 <path d="M38 5v35" stroke="#1a2e4a" stroke-width="3"/><circle cx="38" cy="5" r="3.5" fill="#b8c870" stroke="#5a6a3a"/><circle cx="38" cy="40" r="3.5" fill="#b8c870" stroke="#5a6a3a"/>
</symbol>
<symbol id="icb" viewBox="0 0 44 44">
 <rect x="2" y="3" width="21" height="16" fill="#fbe8d0" stroke="#e87820" stroke-width="2.5"/><path d="M2 9h21M2 14h21M12 3v16" stroke="#e87820" stroke-width="2"/><rect x="2" y="19" width="21" height="16" fill="#dde6ee" stroke="#1e3c5a" stroke-width="2.5"/><path d="M2 25h21M2 30h21M12 19v16" stroke="#1e3c5a" stroke-width="2"/>
 <path d="M16 16c-1 7 3 10 11 10" fill="none" stroke="#3a307a" stroke-width="4"/><path d="M24 20l8 6-8 6z" fill="#3a307a"/>
 <path d="M38 4v35" stroke="#1a2e4a" stroke-width="3"/><circle cx="38" cy="4" r="3.5" fill="#b8c870" stroke="#5a6a3a"/><circle cx="38" cy="21" r="3.5" fill="#b8c870" stroke="#5a6a3a"/><circle cx="38" cy="39" r="3.5" fill="#b8c870" stroke="#5a6a3a"/>
</symbol>
<symbol id="icc" viewBox="0 0 44 44">
 <rect x="3" y="3" width="10" height="18" fill="#e6eef6" stroke="#1e3c5a" stroke-width="1.6"/><rect x="3" y="21" width="10" height="18" fill="#e6eef6" stroke="#1e3c5a" stroke-width="1.6"/><path d="M3 3.5h10" stroke="#12a040" stroke-width="4"/><path d="M3 19.5h10" stroke="#2040e0" stroke-width="3.5"/><path d="M3 23h10" stroke="#12a040" stroke-width="3.5"/><path d="M3 38.5h10" stroke="#2040e0" stroke-width="4"/>
 <path d="M31 19c0 8-5 11-14 11" fill="none" stroke="#3a307a" stroke-width="4"/><path d="M19 24l-8 6 8 6z" fill="#3a307a"/>
 <path d="M38 4v35" stroke="#1a2e4a" stroke-width="3"/><circle cx="38" cy="4" r="3.5" fill="#b8c870" stroke="#5a6a3a"/><circle cx="38" cy="21" r="3.5" fill="#b8c870" stroke="#5a6a3a"/><circle cx="38" cy="39" r="3.5" fill="#b8c870" stroke="#5a6a3a"/>
</symbol>
<symbol id="icheck" viewBox="0 0 20 20"><path d="M3 11l4 5 10-13" fill="none" stroke="#4a9a3a" stroke-width="3"/><path d="M1 18h5" stroke="#888" stroke-width="1" stroke-dasharray="1.5,1"/></symbol>
<symbol id="igear" viewBox="0 0 20 20"><circle cx="10" cy="7.5" r="5.2" fill="#d8d4f4" stroke="#5a6a8a" stroke-width="1.6" stroke-dasharray="1.8,1"/><circle cx="10" cy="7.5" r="2.2" fill="#fff" stroke="#5a6a8a" stroke-width=".8"/><path d="M4 9.5h11" stroke="#c02828" stroke-width="2.4"/><path d="M5.5 6.5l-4.5 3 4.5 3z" fill="#c02828"/><path d="M5 15h10" stroke="#10703a" stroke-width="2.4"/><path d="M14 12l5 3-5 3z" fill="#10703a"/></symbol>
<symbol id="ihelp" viewBox="0 0 20 20"><text x="4.5" y="17" font-family="Liberation Serif" font-weight="bold" font-size="19" fill="#5a9a2a" stroke="#2a5a1a" stroke-width=".6">?</text></symbol>
<symbol id="iplus" viewBox="0 0 20 20"><path d="M10 2v16M2 10h16" stroke="#5a3a9a" stroke-width="5"/></symbol>
<symbol id="iswap" viewBox="0 0 20 20"><path d="M5 6h13" stroke="#b02020" stroke-width="2"/><path d="M6 2l-5 4 5 4z" fill="#b02020"/><path d="M2 14h13" stroke="#208040" stroke-width="2"/><path d="M14 10l5 4-5 4z" fill="#208040"/></symbol>
<symbol id="iscis" viewBox="0 0 20 20"><path d="M5 1l8 12M15 1L7 13" stroke="#555" stroke-width="1.2"/><circle cx="5.5" cy="16" r="3" fill="none" stroke="#2a8ad0" stroke-width="2"/><circle cx="14.5" cy="16" r="3" fill="none" stroke="#2a8ad0" stroke-width="2"/></symbol>
<symbol id="ibasket" viewBox="0 0 20 20"><rect x="3" y="9" width="14" height="9" fill="#f0b040" stroke="#a06010"/><path d="M3 13h14" stroke="#a06010"/><path d="M5 9c0-5 10-5 10 0" fill="#6aa040"/><circle cx="7" cy="6" r="2" fill="#d04040"/></symbol>
<symbol id="ifilter" viewBox="0 0 20 20"><path d="M2 3h16l-6 7v8l-4-2v-6z" fill="#d02020" stroke="#555"/></symbol>
<symbol id="icfilter" viewBox="0 0 20 20"><path d="M2 1l2 12 3-4 5 1z" fill="#333"/><path d="M9 9h10l-4 5v4l-2-1v-3z" fill="none" stroke="#1a3a5a" stroke-width="1.3"/></symbol>
</defs></svg>
<!-- dialog 1 tab icons -->
<svg class="a" style="left:11px;top:38px" width="18" height="18"><use href="#ica"/></svg>
<svg class="a" style="left:53px;top:38px" width="18" height="18"><use href="#icb"/></svg>
<svg class="a" style="left:96px;top:36px" width="18" height="18"><use href="#icc"/></svg>
<!-- dialog 2 tab icons -->
<svg class="a" style="left:11px;top:520px" width="18" height="18"><use href="#ica"/></svg>
<svg class="a" style="left:53px;top:522px" width="18" height="18"><use href="#icb"/></svg>
<svg class="a" style="left:96px;top:522px" width="18" height="18"><use href="#icc"/></svg>
<!-- dialog 1 button icons -->
<svg class="a" style="left:455px;top:423px" width="17" height="17"><use href="#icheck"/></svg>
<svg class="a" style="left:491px;top:423px" width="18" height="17"><use href="#igear"/></svg>
<svg class="a" style="left:528px;top:423px" width="17" height="17"><use href="#ihelp"/></svg>
<div class="a" style="left:568px;top:437px;width:10px;height:10px;background:radial-gradient(circle,#9a9a9a 0.8px,transparent 1px) 0 0/3.3px 3.3px;clip-path:polygon(100% 0,100% 100%,0 100%)"></div>
<!-- dialog 2 button icons -->
<svg class="a" style="left:544px;top:560px" width="17" height="17"><use href="#iplus"/></svg>
<svg class="a" style="left:543px;top:586px" width="18" height="17"><use href="#iswap"/></svg>
<svg class="a" style="left:544px;top:612px" width="17" height="17"><use href="#iscis"/></svg>
<svg class="a" style="left:488px;top:628px" width="34" height="36"><rect x="4" y="4" width="10" height="28" fill="#e8eef4" stroke="#1e2e40" stroke-width="1.6"/><path d="M9 4v28M4 12h10M4 20h10M4 27h10" stroke="#9aa" stroke-width=".8"/><path d="M4 4.5h10" stroke="#10a030" stroke-width="3"/><path d="M4 31.5h10" stroke="#1030e0" stroke-width="3"/><path d="M26 16c0 6-4 9-11 9" fill="none" stroke="#3a307a" stroke-width="3"/><path d="M17 21l-6 4 6 4z" fill="#3a307a"/><path d="M29 6v25" stroke="#1a2e4a" stroke-width="1.6"/><circle cx="29" cy="6" r="2.3" fill="#b8c870" stroke="#5a6a3a" stroke-width=".7"/><circle cx="29" cy="31" r="2.3" fill="#b8c870" stroke="#5a6a3a" stroke-width=".7"/></svg>
<svg class="a" style="left:544px;top:734px" width="17" height="17"><use href="#iscis"/></svg>
<svg class="a" style="left:544px;top:760px" width="17" height="17"><use href="#ibasket"/></svg>
<svg class="a" style="left:544px;top:786px" width="17" height="17"><use href="#ifilter"/></svg>
<svg class="a" style="left:544px;top:812px" width="17" height="17"><use href="#icfilter"/></svg>
<svg class="a" style="left:492px;top:908px" width="18" height="17"><use href="#igear"/></svg>
<svg class="a" style="left:529px;top:908px" width="17" height="17"><use href="#ihelp"/></svg>
<svg class="a" style="left:15px;top:911px" width="12" height="12"><path d="M2 6l3 3 5-7" fill="none" stroke="#222" stroke-width="1.4"/></svg>

<div class="a" style="left:568px;top:922px;width:10px;height:10px;background:radial-gradient(circle,#9a9a9a 0.8px,transparent 1px) 0 0/3.3px 3.3px;clip-path:polygon(100% 0,100% 100%,0 100%)"></div>
<div class="a" style="left:1px;top:933px;width:583px;height:1px;background:#9a9a9a"></div>
<!-- ===== DROPDOWN MENU ===== -->
<div class="a" style="left:1160px;top:82px;width:335px;height:164px;background:rgba(0,0,0,.12);filter:blur(1.5px)"></div>
<div class="a" style="left:1158px;top:80px;width:335px;height:164px;background:#fafafa;border:1px solid #a8acb4"></div>
<div class="a" style="left:1160px;top:189px;width:331px;height:53px;border:1px solid #e8cc78;border-radius:2px;background:linear-gradient(#fffbe8 0,#ffeaa8 40%,#ffd75a 45%,#ffd050 80%,#ffe690 100%)"></div>
<svg class="a" style="left:1164px;top:88px" width="44" height="150">
 <g stroke="#2a4060" stroke-width="1.2" fill="#e6eef6"><path d="M3 7h10v30H3z"/><path d="M13 7h10v30H13z"/><path d="M3 7l4-4h20l-4 4z" fill="#c8d8e8"/><path d="M23 7l4-4v30l-4 4z" fill="#b0c4d8"/></g>
 <path d="M3 14h20M3 22h20M3 30h20" stroke="#2a4060" stroke-width="1"/>
 <path d="M14 28c-1 8 3 12 12 11" fill="none" stroke="#3a307a" stroke-width="3"/><path d="M24 33l7 6-7 6z" fill="#3a307a"/>
 <path d="M38 5v35" stroke="#1a2e4a" stroke-width="2.2"/><circle cx="38" cy="5" r="2.8" fill="#b8c870" stroke="#5a6a3a" stroke-width=".8"/><circle cx="38" cy="40" r="2.8" fill="#b8c870" stroke="#5a6a3a" stroke-width=".8"/>
 <g transform="translate(0,52)"><rect x="2" y="3" width="21" height="16" fill="#fbe8d0" stroke="#e87820" stroke-width="2"/><path d="M2 9h21M2 14h21M12 3v16" stroke="#e87820" stroke-width="1.6"/><rect x="2" y="19" width="21" height="14" fill="#dde6ee" stroke="#1e3c5a" stroke-width="2"/><path d="M2 24h21M2 29h21M12 19v14" stroke="#1e3c5a" stroke-width="1.6"/>
 <path d="M16 16c-1 7 3 10 11 10" fill="none" stroke="#3a307a" stroke-width="3"/><path d="M24 21l7 5-7 5z" fill="#3a307a"/>
 <path d="M38 3v33" stroke="#1a2e4a" stroke-width="2.2"/><circle cx="38" cy="3" r="2.8" fill="#b8c870" stroke="#5a6a3a" stroke-width=".8"/><circle cx="38" cy="19.5" r="2.8" fill="#b8c870" stroke="#5a6a3a" stroke-width=".8"/><circle cx="38" cy="36" r="2.8" fill="#b8c870" stroke="#5a6a3a" stroke-width=".8"/></g>
 <g transform="translate(0,106)"><rect x="3" y="3" width="9" height="16" fill="#e6eef6" stroke="#1e3c5a" stroke-width="1.2"/><rect x="3" y="19" width="9" height="17" fill="#e6eef6" stroke="#1e3c5a" stroke-width="1.2"/><path d="M3 3h9" stroke="#12a040" stroke-width="3"/><path d="M3 18h9" stroke="#2040e0" stroke-width="2.5"/><path d="M3 21h9" stroke="#12a040" stroke-width="2.5"/><path d="M3 36h9" stroke="#2040e0" stroke-width="3"/>
 <path d="M30 18c0 7-5 10-14 10" fill="none" stroke="#3a307a" stroke-width="3"/><path d="M18 24l-7 4 7 5z" fill="#3a307a"/>
 <path d="M38 3v33" stroke="#1a2e4a" stroke-width="2.2"/><circle cx="38" cy="3" r="2.8" fill="#b8c870" stroke="#5a6a3a" stroke-width=".8"/><circle cx="38" cy="19.5" r="2.8" fill="#b8c870" stroke="#5a6a3a" stroke-width=".8"/><circle cx="38" cy="36" r="2.8" fill="#b8c870" stroke="#5a6a3a" stroke-width=".8"/></g>
</svg>
<div class="t" style="left:1212px;top:102px;font-size:10.3px;color:#111">Стержневые аналоги</div>
<div class="t" style="left:1212px;top:156px;font-size:10.4px;color:#111">Создание стержневых аналогов по вектору</div>
<div class="t" style="left:1212px;top:210px;font-size:10.4px;color:#111">Создание стержневых аналогов по целевым стержням</div>
<!-- ===== TOOLTIP ===== -->
<div class="a" style="left:1230px;top:232px;width:331px;height:60px;background:rgba(0,0,0,.25);filter:blur(2px)"></div>
<div class="a" style="left:1228px;top:229px;width:330px;height:60px;border:1px solid #8c929c;border-radius:2px;background:linear-gradient(#ffffff,#e4e7ec 70%,#d6dae2)"></div>
<svg class="a" style="left:1233px;top:232px" width="44" height="48">
 <g transform="translate(0,2)"><rect x="3" y="3" width="9" height="17" fill="#e6eef6" stroke="#1e3c5a" stroke-width="1.2"/><rect x="3" y="20" width="9" height="17" fill="#e6eef6" stroke="#1e3c5a" stroke-width="1.2"/><path d="M3 3h9" stroke="#12a040" stroke-width="3"/><path d="M3 19h9" stroke="#2040e0" stroke-width="2.5"/><path d="M3 22h9" stroke="#12a040" stroke-width="2.5"/><path d="M3 37h9" stroke="#2040e0" stroke-width="3"/>
 <path d="M30 18c0 7-5 11-14 11" fill="none" stroke="#3a307a" stroke-width="3"/><path d="M18 25l-7 4 7 5z" fill="#3a307a"/>
 <path d="M37 3v33" stroke="#1a2e4a" stroke-width="2.2"/><circle cx="37" cy="3" r="2.8" fill="#b8c870" stroke="#5a6a3a" stroke-width=".8"/><circle cx="37" cy="19.5" r="2.8" fill="#b8c870" stroke="#5a6a3a" stroke-width=".8"/><circle cx="37" cy="36" r="2.8" fill="#b8c870" stroke="#5a6a3a" stroke-width=".8"/></g>
</svg>
<div class="t" style="left:1281px;top:231px;font-size:9.9px;line-height:13px;font-weight:bold;color:#3a3a3a">Создание стержневых аналогов по целевым стержням</div>
<div class="t" style="left:1281px;top:248px;font-size:10.4px;line-height:12px;color:#5a5a5a">Автоматизированное создание</div>
<div class="t" style="left:1281px;top:260px;font-size:10.4px;line-height:12px;color:#5a5a5a">стержневых аналогов по целевым</div>
<div class="t" style="left:1281px;top:272px;font-size:10.4px;line-height:12px;color:#5a5a5a">стержням</div>
<!-- ===== ORANGE ARROW ===== -->
<svg class="a" style="left:420px;top:430px" width="90" height="115"><path d="M27.1 11.1H57.9V78.2H75.7L42.5 106.5L8.9 78.2H27.1Z" fill="#f7cbaa"/></svg>

</body></html>
